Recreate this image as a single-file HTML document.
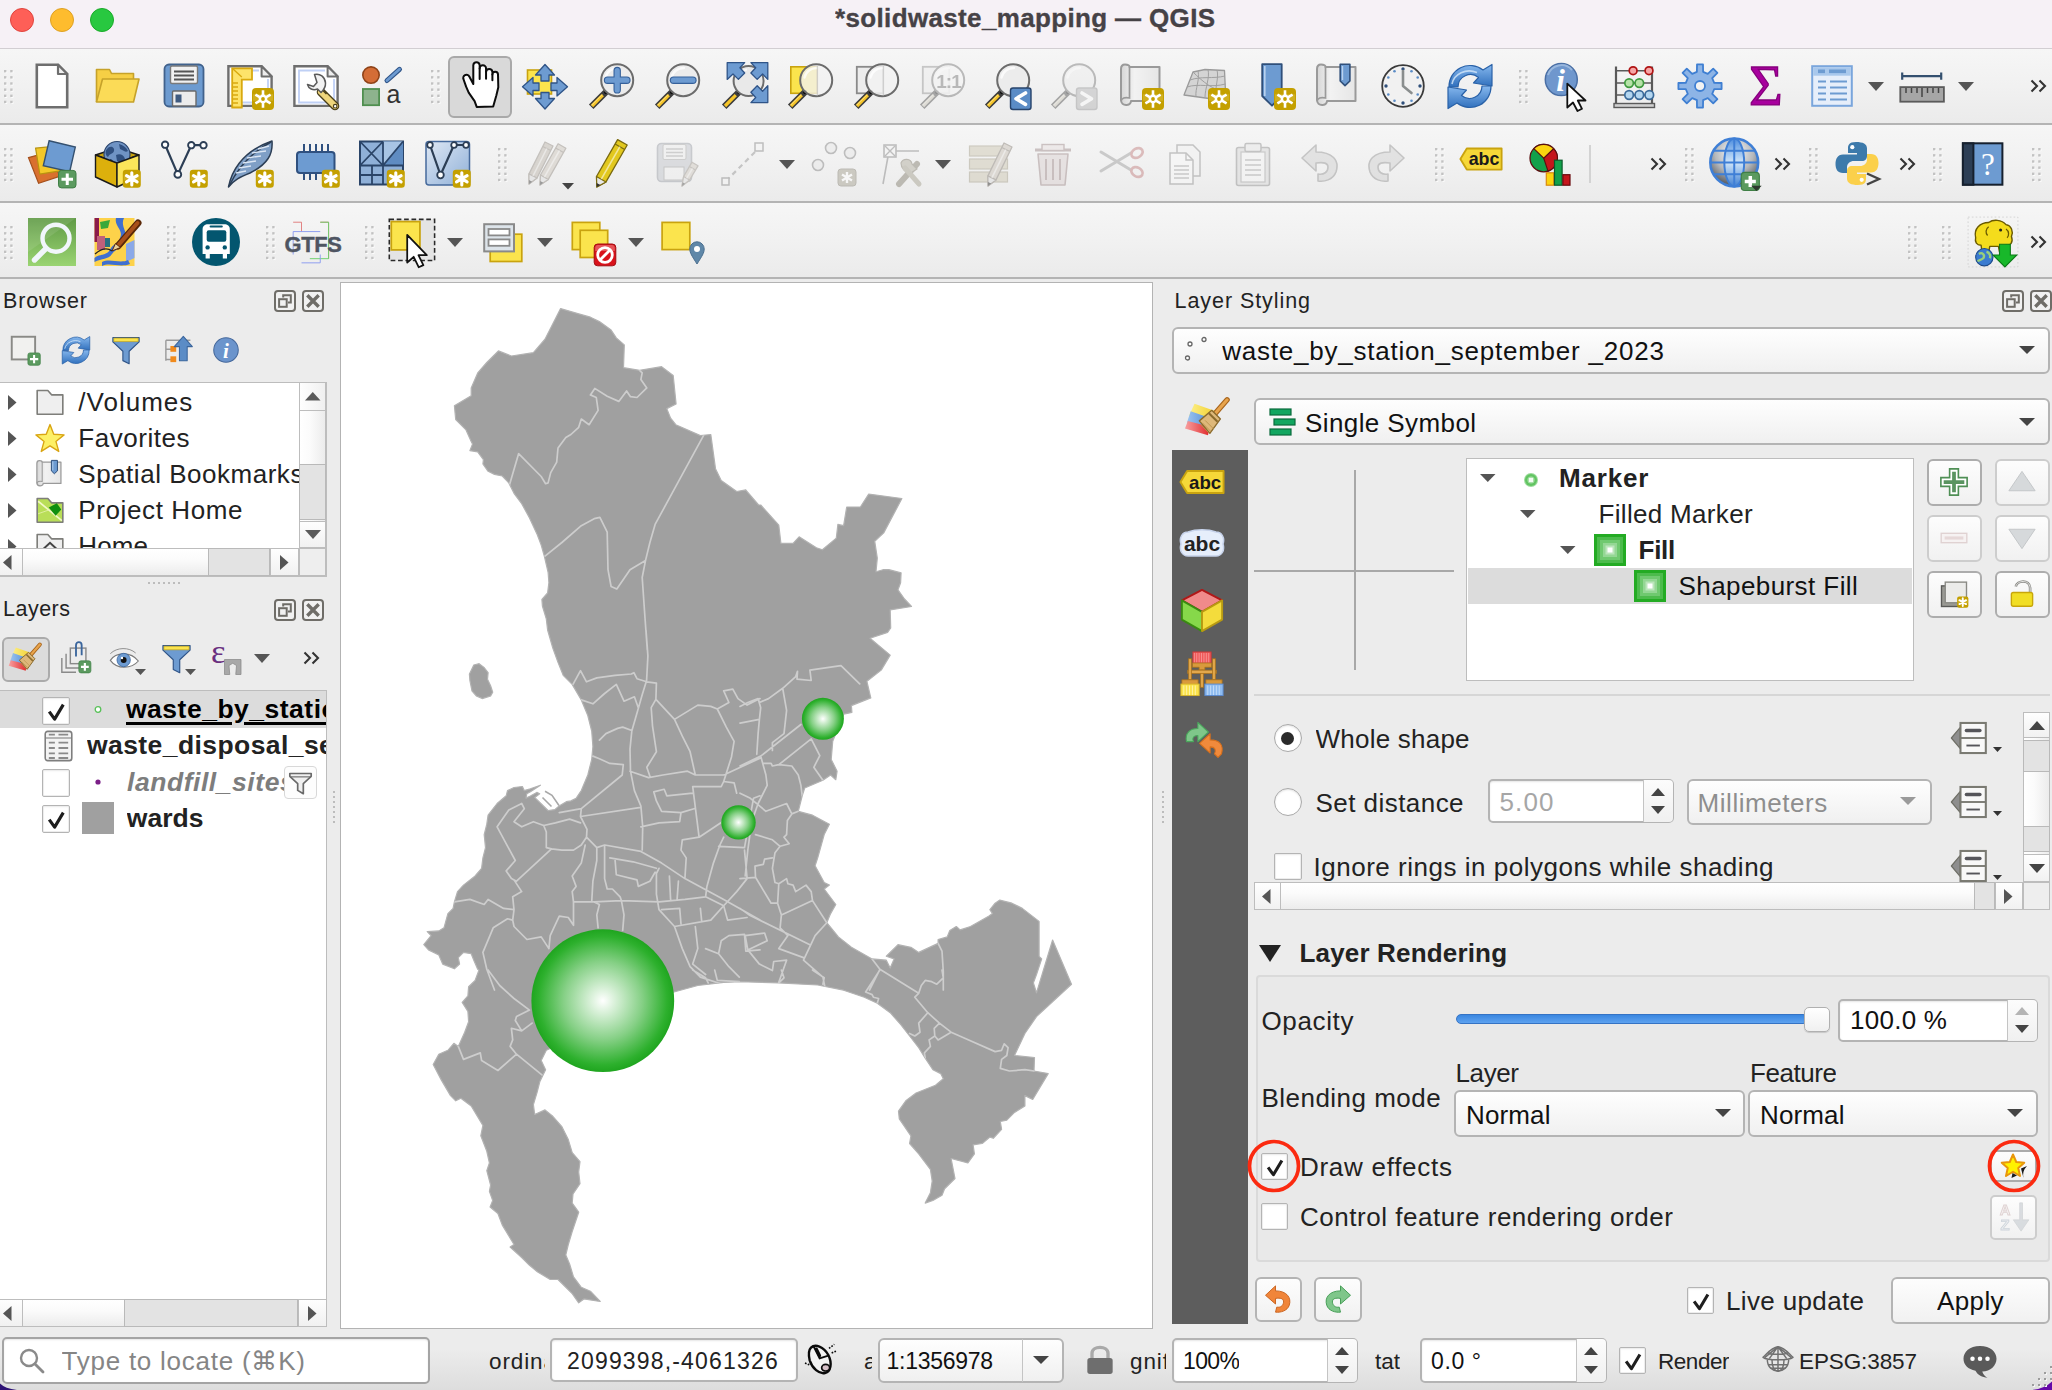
<!DOCTYPE html>
<html><head><meta charset="utf-8"><title>QGIS</title><style>
*{box-sizing:border-box}
html,body{margin:0;padding:0}
body{width:2052px;height:1390px;overflow:hidden;background:#ececec;font-family:"Liberation Sans",sans-serif;position:relative}
div,svg{position:absolute}
svg{overflow:visible}
.t{white-space:pre;overflow:hidden}
.w{background:#fff;border:1px solid #bdbdbd}
.btn{background:linear-gradient(#fdfdfd,#f1f1f1);border:2px solid #b4b4b4;border-radius:6px}
.combo{background:linear-gradient(#fefefe,#f0f0f0);border:2px solid #b4b4b4;border-radius:6px}
.inp{background:#fff;border:2px solid #b4b4b4;border-radius:5px;box-shadow:inset 0 1px 2px rgba(0,0,0,.10)}
.cb{background:#fff;border:1.5px solid #b4b4b4;border-radius:2px;box-shadow:inset 0 0 0 1px #ededed, inset 0 1px 2px rgba(0,0,0,.08)}
.sb{background:linear-gradient(90deg,#fff,#fbfbfb 40%,#ececec);border:1px solid #bdbdbd}
.sbh{background:linear-gradient(#fff,#fbfbfb 40%,#ececec);border:1px solid #bdbdbd}
.th{background:#e3e3e3;border:1px solid #b9b9b9}
.tb{left:0;width:2052px;background:linear-gradient(#f6f6f6,#f1f1f1 50%,#ebebeb);border-bottom:2px solid #b4b4b4}
</style></head><body>
<div style="left:0px;top:0px;width:2052px;height:49px;background:#f6f1f6;border-bottom:1px solid #d2ced2"></div>
<div style="left:10px;top:8px;width:24px;height:24px;border-radius:50%;background:#fe5f57;border:1px solid #e0443e"></div>
<div style="left:50px;top:8px;width:24px;height:24px;border-radius:50%;background:#febc2e;border:1px solid #dea123"></div>
<div style="left:90px;top:8px;width:24px;height:24px;border-radius:50%;background:#28c840;border:1px solid #1aab29"></div>
<div class="t" style="left:835.0px;top:0px;height:36px;line-height:36px;font-size:26px;font-weight:700;color:#464246;-webkit-text-stroke:0.35px #464246;letter-spacing:0.35px;">*solidwaste_mapping — QGIS</div>
<div class="tb" style="left:0px;top:49px;width:2052px;height:76px;"></div>
<div class="tb" style="left:0px;top:125px;width:2052px;height:78px;"></div>
<div class="tb" style="left:0px;top:203px;width:2052px;height:76px;"></div>
<svg style="left:4.1px;top:69.5px" width="10" height="35" viewBox="0 0 10 35"><rect x="1" y="1" width="2.2" height="2.2" fill="#fff"/><rect x="0" y="0" width="2.4" height="2.4" fill="#c2c2c2"/><rect x="7.2" y="1" width="2.2" height="2.2" fill="#fff"/><rect x="6.2" y="0" width="2.4" height="2.4" fill="#c2c2c2"/><rect x="1" y="7.15" width="2.2" height="2.2" fill="#fff"/><rect x="0" y="6.15" width="2.4" height="2.4" fill="#c2c2c2"/><rect x="7.2" y="7.15" width="2.2" height="2.2" fill="#fff"/><rect x="6.2" y="6.15" width="2.4" height="2.4" fill="#c2c2c2"/><rect x="1" y="13.3" width="2.2" height="2.2" fill="#fff"/><rect x="0" y="12.3" width="2.4" height="2.4" fill="#c2c2c2"/><rect x="7.2" y="13.3" width="2.2" height="2.2" fill="#fff"/><rect x="6.2" y="12.3" width="2.4" height="2.4" fill="#c2c2c2"/><rect x="1" y="19.45" width="2.2" height="2.2" fill="#fff"/><rect x="0" y="18.45" width="2.4" height="2.4" fill="#c2c2c2"/><rect x="7.2" y="19.45" width="2.2" height="2.2" fill="#fff"/><rect x="6.2" y="18.45" width="2.4" height="2.4" fill="#c2c2c2"/><rect x="1" y="25.6" width="2.2" height="2.2" fill="#fff"/><rect x="0" y="24.6" width="2.4" height="2.4" fill="#c2c2c2"/><rect x="7.2" y="25.6" width="2.2" height="2.2" fill="#fff"/><rect x="6.2" y="24.6" width="2.4" height="2.4" fill="#c2c2c2"/><rect x="1" y="31.75" width="2.2" height="2.2" fill="#fff"/><rect x="0" y="30.75" width="2.4" height="2.4" fill="#c2c2c2"/><rect x="7.2" y="31.75" width="2.2" height="2.2" fill="#fff"/><rect x="6.2" y="30.75" width="2.4" height="2.4" fill="#c2c2c2"/></svg>
<svg style="left:28px;top:62px" width="48" height="48" viewBox="0 0 48 48"><path d="M8.800,2.800H30L39.200,12V45.200H8.800Z" fill="#fff" stroke="#6e6e6e" stroke-width="2.600"/><path d="M30,2.800V12H39.200Z" fill="#f0f0f0" stroke="#6e6e6e" stroke-width="2.200" stroke-linejoin="round"/></svg>
<svg style="left:93px;top:62px" width="48" height="48" viewBox="0 0 48 48"><path d="M3.5,40V7.5H16.5L18.5,11.5H40.5V17" fill="#f6cf45" stroke="#c6a22a" stroke-width="1.6" stroke-linejoin="round"/><path d="M3.5,40L9.5,17H46L40.5,40Z" fill="#fbdb57" stroke="#c6a22a" stroke-width="1.6" stroke-linejoin="round"/></svg>
<svg style="left:160px;top:62px" width="48" height="48" viewBox="0 0 48 48"><rect x="4.500" y="2.500" width="39" height="42" rx="4.500" fill="#6d9bd0" stroke="#41628c" stroke-width="1.800"/><rect x="10.500" y="4" width="27" height="17.500" rx="1.500" fill="#f1f1f1" stroke="#7a7a7a" stroke-width="1.400"/><path d="M14,9.500H34M14,13.500H34M14,17.500H34" stroke="#555" stroke-width="1.900"/><rect x="12.500" y="29" width="23.500" height="15" rx="1" fill="#ececec" stroke="#6a6a6a" stroke-width="1.400"/><rect x="15.500" y="32.500" width="6" height="8" fill="#3f5b80"/></svg>
<svg style="left:226px;top:62px" width="48" height="48" viewBox="0 0 48 48"><path d="M2.400,4.200H35.600L45.600,14.400V43.900H2.400Z" fill="#fff" stroke="#6e6e6e" stroke-width="2.400" stroke-linejoin="miter"/><path d="M35.600,4.200V14.400H45.600Z" fill="#ededed" stroke="#6e6e6e" stroke-width="2" stroke-linejoin="round"/><path d="M16,8.500H33M42,17V40.500H16" fill="none" stroke="#bfd0f5" stroke-width="1.800"/><path d="M6.200,6.300H26V17.600H15.800V45.500H6.200Z" fill="#fde36a" stroke="#d9a90f" stroke-width="1.800"/><path d="M6.200,6.300L15.800,15" stroke="#d9a90f" stroke-width="1.400"/><path d="M7,21H12M7,25H12M7,29H12M7,33H12M7,37H12M7,41H12" stroke="#d9a90f" stroke-width="1.700"/><rect x="26" y="26" width="22" height="22" rx="4.0" fill="#c4a000"/><rect x="27" y="32.2" width="20" height="6.6" fill="#d8bb3a" opacity=".55"/><path d="M37.0,28.2L37.0,45.8M44.6,32.6L29.4,41.4M44.6,41.4L29.4,32.6" stroke="#fff" stroke-width="2.6"/><circle cx="37" cy="37" r="4.4" fill="#fff"/><circle cx="37" cy="37" r="1.9" fill="#c4a000"/></svg>
<svg style="left:292px;top:62px" width="48" height="48" viewBox="0 0 48 48"><path d="M2.400,4.200H35.600L45.600,14.400V43.900H2.400Z" fill="#fff" stroke="#6e6e6e" stroke-width="2.400"/><path d="M35.600,4.200V14.400H45.600Z" fill="#ededed" stroke="#6e6e6e" stroke-width="2" stroke-linejoin="round"/><path d="M33,8.500H7V40.500H42V17" fill="none" stroke="#bfd0f5" stroke-width="1.800"/><path d="M29,30L43,44" stroke="#4a3f1a" stroke-width="8.600" stroke-linecap="round"/><path d="M29,30L43,44" stroke="#efd67c" stroke-width="6" stroke-linecap="round"/><path d="M30,27.500L34.500,32" stroke="#4a3f1a" stroke-width="1.600"/><circle cx="43.200" cy="44.200" r="1.800" fill="#fff" stroke="#4a3f1a" stroke-width="1.200"/><path d="M22.500,12.500C28,11 33,15 33.500,21C33.800,26 31,28.500 29,30.500L25.500,27C21,29 16.500,26.500 15.500,22.500L21.500,24.500L25,20.500Z" fill="#f2f2f2" stroke="#5a5a5a" stroke-width="1.500" stroke-linejoin="round"/></svg>
<svg style="left:357px;top:62px" width="48" height="48" viewBox="0 0 48 48"><circle cx="14" cy="13.100" r="8.200" fill="#d46d36" stroke="#8f4318" stroke-width="1.600"/><path d="M30,18.500L42.500,7.300" stroke="#2f5488" stroke-width="5" stroke-linecap="round"/><path d="M30,18.500L42.500,7.300" stroke="#6d9bd1" stroke-width="2.800" stroke-linecap="round"/><rect x="5.900" y="27" width="16.200" height="16.200" fill="#8db38d" stroke="#4f8f4f" stroke-width="1.800"/><text x="29.500" y="41.300" font-family="'Liberation Sans',sans-serif" font-size="25" fill="#333">a</text></svg>
<svg style="left:430.7px;top:69.5px" width="10" height="35" viewBox="0 0 10 35"><rect x="1" y="1" width="2.2" height="2.2" fill="#fff"/><rect x="0" y="0" width="2.4" height="2.4" fill="#c2c2c2"/><rect x="7.2" y="1" width="2.2" height="2.2" fill="#fff"/><rect x="6.2" y="0" width="2.4" height="2.4" fill="#c2c2c2"/><rect x="1" y="7.15" width="2.2" height="2.2" fill="#fff"/><rect x="0" y="6.15" width="2.4" height="2.4" fill="#c2c2c2"/><rect x="7.2" y="7.15" width="2.2" height="2.2" fill="#fff"/><rect x="6.2" y="6.15" width="2.4" height="2.4" fill="#c2c2c2"/><rect x="1" y="13.3" width="2.2" height="2.2" fill="#fff"/><rect x="0" y="12.3" width="2.4" height="2.4" fill="#c2c2c2"/><rect x="7.2" y="13.3" width="2.2" height="2.2" fill="#fff"/><rect x="6.2" y="12.3" width="2.4" height="2.4" fill="#c2c2c2"/><rect x="1" y="19.45" width="2.2" height="2.2" fill="#fff"/><rect x="0" y="18.45" width="2.4" height="2.4" fill="#c2c2c2"/><rect x="7.2" y="19.45" width="2.2" height="2.2" fill="#fff"/><rect x="6.2" y="18.45" width="2.4" height="2.4" fill="#c2c2c2"/><rect x="1" y="25.6" width="2.2" height="2.2" fill="#fff"/><rect x="0" y="24.6" width="2.4" height="2.4" fill="#c2c2c2"/><rect x="7.2" y="25.6" width="2.2" height="2.2" fill="#fff"/><rect x="6.2" y="24.6" width="2.4" height="2.4" fill="#c2c2c2"/><rect x="1" y="31.75" width="2.2" height="2.2" fill="#fff"/><rect x="0" y="30.75" width="2.4" height="2.4" fill="#c2c2c2"/><rect x="7.2" y="31.75" width="2.2" height="2.2" fill="#fff"/><rect x="6.2" y="30.75" width="2.4" height="2.4" fill="#c2c2c2"/></svg>
<div style="left:448px;top:56px;width:64px;height:62px;background:#d9d9d9;border:2px solid #a9a9a9;border-radius:6px"></div>
<svg style="left:456px;top:62px" width="48" height="48" viewBox="0 0 48 48"><path d="M17.300,22V3.100A3.200,3.200 0 0 1 23.650,3.100V6.400A3.200,3.200 0 0 1 30.050,6.400V9.800A3.200,3.200 0 0 1 36.400,9.800V12.500A2.800,2.800 0 0 1 42,12.500L42.300,25.300L40.400,33.200L37.200,44.400L20.700,44.900L18.600,39.100L12.700,30.600L10.100,24.700L7.600,17.500A3,3 0 0 1 13.300,14.500Z" fill="#fff" stroke="#0c0c0c" stroke-width="2" stroke-linejoin="round"/><path d="M23.650,6.400V17M30.050,9.800V16.700M36.400,12.500V18.300" fill="none" stroke="#0c0c0c" stroke-width="2" stroke-linecap="round"/></svg>
<svg style="left:521px;top:62px" width="48" height="48" viewBox="0 0 48 48"><rect x="6.500" y="8" width="24" height="24" fill="#fbe44d" stroke="#c9a30f" stroke-width="1.600"/><g fill="#6d9bd1" stroke="#2f5488" stroke-width="1.300" stroke-linejoin="round"><path d="M24,2.500L33.500,13H28V19H20V13H14.500Z"/><path d="M24,47L33.500,36.500H28V30.500H20V36.500H14.500Z"/><path d="M1.500,24.700L12,15.500V21H18V28.500H12V34Z"/><path d="M46.500,24.700L36,15.500V21H30V28.500H36V34Z"/></g></svg>
<svg style="left:587px;top:62px" width="48" height="48" viewBox="0 0 48 48"><path d="M19.5,29.5L4.2,44.8" stroke="#3c3c3c" stroke-width="6.4"/><path d="M15.8,33.2L5,44" stroke="#f7c62a" stroke-width="3.2"/><path d="M15.2,32.6L4.4,43.4" stroke="#fde58a" stroke-width="1" opacity=".9"/><circle cx="19" cy="30" r="1.9" fill="#000"/><circle cx="30.2" cy="18.2" r="16" fill="#ececec" fill-opacity="1" stroke="#6c6c6c" stroke-width="2"/><path d="M18.5,15.5A12,12 0 0 1 31,6" fill="none" stroke="#fff" stroke-width="2.4" opacity=".75" stroke-linecap="round"/><path d="M30.2,8.5V27.9M20.5,18.2H39.9" stroke="#35609a" stroke-width="7.4" stroke-linecap="round"/><path d="M30.2,8.5V27.9M20.5,18.2H39.9" stroke="#6d9bd1" stroke-width="5.2" stroke-linecap="round"/></svg>
<svg style="left:653px;top:62px" width="48" height="48" viewBox="0 0 48 48"><path d="M19.5,29.5L4.2,44.8" stroke="#3c3c3c" stroke-width="6.4"/><path d="M15.8,33.2L5,44" stroke="#f7c62a" stroke-width="3.2"/><path d="M15.2,32.6L4.4,43.4" stroke="#fde58a" stroke-width="1" opacity=".9"/><circle cx="19" cy="30" r="1.9" fill="#000"/><circle cx="30.2" cy="18.2" r="16" fill="#ececec" fill-opacity="1" stroke="#6c6c6c" stroke-width="2"/><path d="M18.5,15.5A12,12 0 0 1 31,6" fill="none" stroke="#fff" stroke-width="2.4" opacity=".75" stroke-linecap="round"/><path d="M20.5,18.2H39.9" stroke="#35609a" stroke-width="7.4" stroke-linecap="round"/><path d="M20.5,18.2H39.9" stroke="#6d9bd1" stroke-width="5.2" stroke-linecap="round"/></svg>
<svg style="left:720px;top:62px" width="48" height="48" viewBox="0 0 48 48"><path d="M19.5,29.5L4.2,44.8" stroke="#3c3c3c" stroke-width="6.4"/><path d="M15.8,33.2L5,44" stroke="#f7c62a" stroke-width="3.2"/><circle cx="19" cy="30" r="1.9" fill="#000"/><circle cx="28.6" cy="19" r="15" fill="#e9e9e9" stroke="#6c6c6c" stroke-width="2"/><path d="M17.5,17A11,11 0 0 1 27,7.5" fill="none" stroke="#fff" stroke-width="2.2" opacity=".7"/><g fill="#6d9bd1" stroke="#2f5488" stroke-width="1.3" stroke-linejoin="round"><path d="M7.2,0.6H24.7L19.9,5.7L24.7,11L18.4,17.4L13,12L7.2,17.4Z"/><path d="M47.8,0.6H30.9L35.7,5.7L30.9,11L37.2,17.4L42.6,12L47.8,17.4Z"/><path d="M47.8,40.6H30.9L35.7,35.5L30.9,30.2L37.2,23.8L42.6,29.2L47.8,23.8Z"/></g></svg>
<svg style="left:786px;top:62px" width="48" height="48" viewBox="0 0 48 48"><rect x="4.800" y="4.800" width="26.500" height="26.500" fill="#fbe44d" stroke="#c9a30f" stroke-width="1.600"/><path d="M19.5,29.5L4.2,44.8" stroke="#3c3c3c" stroke-width="6.4"/><path d="M15.8,33.2L5,44" stroke="#f7c62a" stroke-width="3.2"/><path d="M15.2,32.6L4.4,43.4" stroke="#fde58a" stroke-width="1" opacity=".9"/><circle cx="19" cy="30" r="1.9" fill="#000"/><circle cx="30.2" cy="18.2" r="16" fill="#f2f2f2" fill-opacity="0.78" stroke="#6c6c6c" stroke-width="2"/><path d="M18.5,15.5A12,12 0 0 1 31,6" fill="none" stroke="#fff" stroke-width="2.4" opacity=".75" stroke-linecap="round"/><path d="M31.300,3V33.500" stroke="#c8c8c8" stroke-width="1"/></svg>
<svg style="left:852px;top:62px" width="48" height="48" viewBox="0 0 48 48"><rect x="4.800" y="4.800" width="26.500" height="26.500" fill="#ececec" stroke="#8a8a8a" stroke-width="1.800"/><path d="M19.5,29.5L4.2,44.8" stroke="#3c3c3c" stroke-width="6.4"/><path d="M15.8,33.2L5,44" stroke="#f7c62a" stroke-width="3.2"/><path d="M15.2,32.6L4.4,43.4" stroke="#fde58a" stroke-width="1" opacity=".9"/><circle cx="19" cy="30" r="1.9" fill="#000"/><circle cx="30.2" cy="18.2" r="16" fill="#f2f2f2" fill-opacity="0.85" stroke="#6c6c6c" stroke-width="2"/><path d="M18.5,15.5A12,12 0 0 1 31,6" fill="none" stroke="#fff" stroke-width="2.4" opacity=".75" stroke-linecap="round"/><path d="M31.300,3V33.500" stroke="#c8c8c8" stroke-width="1"/></svg>
<svg style="left:918px;top:62px;opacity:0.42;filter:grayscale(0.9)" width="48" height="48" viewBox="0 0 48 48"><rect x="4.800" y="4.800" width="26.500" height="26.500" fill="#ececec" stroke="#8a8a8a" stroke-width="1.800"/><path d="M19.5,29.5L4.2,44.8" stroke="#3c3c3c" stroke-width="6.4"/><path d="M15.8,33.2L5,44" stroke="#f7c62a" stroke-width="3.2"/><path d="M15.2,32.6L4.4,43.4" stroke="#fde58a" stroke-width="1" opacity=".9"/><circle cx="19" cy="30" r="1.9" fill="#000"/><circle cx="30.2" cy="18.2" r="16" fill="#f6f6f6" fill-opacity="0.85" stroke="#6c6c6c" stroke-width="2"/><path d="M18.5,15.5A12,12 0 0 1 31,6" fill="none" stroke="#fff" stroke-width="2.4" opacity=".75" stroke-linecap="round"/><text x="30.500" y="26" text-anchor="middle" font-family="'Liberation Sans',sans-serif" font-weight="700" font-size="19" fill="#6a6a6a" letter-spacing="-1">1:1</text></svg>
<svg style="left:983px;top:62px" width="48" height="48" viewBox="0 0 48 48"><path d="M19.5,29.5L4.2,44.8" stroke="#3c3c3c" stroke-width="6.4"/><path d="M15.8,33.2L5,44" stroke="#f7c62a" stroke-width="3.2"/><path d="M15.2,32.6L4.4,43.4" stroke="#fde58a" stroke-width="1" opacity=".9"/><circle cx="19" cy="30" r="1.9" fill="#000"/><circle cx="30.2" cy="18.2" r="16" fill="#ececec" fill-opacity="1" stroke="#6c6c6c" stroke-width="2"/><path d="M18.5,15.5A12,12 0 0 1 31,6" fill="none" stroke="#fff" stroke-width="2.4" opacity=".75" stroke-linecap="round"/><rect x="27.500" y="26" width="20.500" height="21.500" rx="2.500" fill="#5b8cc6" stroke="#27436b" stroke-width="1.400"/><path d="M42.500,31L33,36.700L42.500,42.400" fill="none" stroke="#fff" stroke-width="3.600" stroke-linecap="round" stroke-linejoin="round"/></svg>
<svg style="left:1049px;top:62px;opacity:0.42;filter:grayscale(0.9)" width="48" height="48" viewBox="0 0 48 48"><path d="M19.5,29.5L4.2,44.8" stroke="#3c3c3c" stroke-width="6.4"/><path d="M15.8,33.2L5,44" stroke="#f7c62a" stroke-width="3.2"/><path d="M15.2,32.6L4.4,43.4" stroke="#fde58a" stroke-width="1" opacity=".9"/><circle cx="19" cy="30" r="1.9" fill="#000"/><circle cx="30.2" cy="18.2" r="16" fill="#ececec" fill-opacity="1" stroke="#6c6c6c" stroke-width="2"/><path d="M18.5,15.5A12,12 0 0 1 31,6" fill="none" stroke="#fff" stroke-width="2.4" opacity=".75" stroke-linecap="round"/><rect x="27.500" y="26" width="20.500" height="21.500" rx="2.500" fill="#aab0b6" stroke="#8a8f95" stroke-width="1.400"/><path d="M33,31L42.500,36.700L33,42.400" fill="none" stroke="#fff" stroke-width="3.600" stroke-linecap="round" stroke-linejoin="round"/></svg>
<svg style="left:1118px;top:62px" width="48" height="48" viewBox="0 0 48 48"><defs><linearGradient id="scg" x1="0" x2="1"><stop offset="0" stop-color="#d6d6d6"/><stop offset=".35" stop-color="#f2f2f2"/><stop offset="1" stop-color="#e6e6e6"/></linearGradient></defs><path d="M7,2.500C3.500,2.500 3,5 3,7V38C3,44.500 13,44.500 13,39H41.500V5H11.500C11.500,3 9,2.500 7,2.500Z" fill="url(#scg)" stroke="#9a9a9a" stroke-width="2" stroke-linejoin="round"/><path d="M11.500,5V36C7,35 3.500,36 3,39" fill="none" stroke="#9a9a9a" stroke-width="1.700"/><rect x="24" y="26" width="22" height="22" rx="4.0" fill="#c4a000"/><rect x="25" y="32.2" width="20" height="6.6" fill="#d8bb3a" opacity=".55"/><path d="M35.0,28.2L35.0,45.8M42.6,32.6L27.4,41.4M42.6,41.4L27.4,32.6" stroke="#fff" stroke-width="2.6"/><circle cx="35" cy="37" r="4.4" fill="#fff"/><circle cx="35" cy="37" r="1.9" fill="#c4a000"/></svg>
<svg style="left:1183px;top:62px" width="48" height="48" viewBox="0 0 48 48"><path d="M1,33L10,10L22,7.500L41.500,8.500L42.500,30L26,36.500Z" fill="#d4d4d4" stroke="#9a9a9a" stroke-width="1.300" stroke-linejoin="round"/><path d="M7,18C18,14 30,17 42,14M4,25C16,21 28,26 42.500,22M15,9C17,18 12,27 13,34.500M25,7.500C27,16 22,26 22,35.500M34,8C36,16 32,24 33,33M10,10C20,20 30,28 42.500,30" stroke="#a0a0a0" stroke-width="1" fill="none"/><rect x="25" y="26" width="22" height="22" rx="4.0" fill="#c4a000"/><rect x="26" y="32.2" width="20" height="6.6" fill="#d8bb3a" opacity=".55"/><path d="M36.0,28.2L36.0,45.8M43.6,32.6L28.4,41.4M43.6,41.4L28.4,32.6" stroke="#fff" stroke-width="2.6"/><circle cx="36" cy="37" r="4.4" fill="#fff"/><circle cx="36" cy="37" r="1.9" fill="#c4a000"/></svg>
<svg style="left:1254px;top:62px" width="48" height="48" viewBox="0 0 48 48"><path d="M8.200,2.200H27.700V34L18,43.700L8.200,34Z" fill="#6d9bd1" stroke="#2f4f7a" stroke-width="1.800" stroke-linejoin="round"/><path d="M10.800,4V34" stroke="#b9d2ef" stroke-width="1.600"/><rect x="20" y="26" width="22" height="22" rx="4.0" fill="#c4a000"/><rect x="21" y="32.2" width="20" height="6.6" fill="#d8bb3a" opacity=".55"/><path d="M31.0,28.2L31.0,45.8M38.6,32.6L23.4,41.4M38.6,41.4L23.4,32.6" stroke="#fff" stroke-width="2.6"/><circle cx="31" cy="37" r="4.4" fill="#fff"/><circle cx="31" cy="37" r="1.9" fill="#c4a000"/></svg>
<svg style="left:1314px;top:62px" width="48" height="48" viewBox="0 0 48 48"><defs><linearGradient id="scg" x1="0" x2="1"><stop offset="0" stop-color="#d6d6d6"/><stop offset=".35" stop-color="#f2f2f2"/><stop offset="1" stop-color="#e6e6e6"/></linearGradient></defs><path d="M7,2.500C3.500,2.500 3,5 3,7V38C3,44.500 13,44.500 13,39H41.500V5H11.500C11.500,3 9,2.500 7,2.500Z" fill="url(#scg)" stroke="#9a9a9a" stroke-width="2" stroke-linejoin="round"/><path d="M11.500,5V36C7,35 3.500,36 3,39" fill="none" stroke="#9a9a9a" stroke-width="1.700"/><path d="M26.200,2.200H35.900V19L31,23.600L26.200,19Z" fill="#6d9bd1" stroke="#2f4f7a" stroke-width="1.600" stroke-linejoin="round"/><path d="M28.500,4V18" stroke="#b9d2ef" stroke-width="1.400"/></svg>
<svg style="left:1379px;top:62px" width="48" height="48" viewBox="0 0 48 48"><circle cx="24" cy="24" r="20.800" fill="#f1f1f1" stroke="#3a3a3a" stroke-width="1.800"/><circle cx="41.0" cy="24.0" r="1.7" fill="#2f4f7a"/><circle cx="38.7" cy="32.5" r="1.3" fill="#5b8cc6"/><circle cx="32.5" cy="38.7" r="1.3" fill="#5b8cc6"/><circle cx="24.0" cy="41.0" r="1.7" fill="#2f4f7a"/><circle cx="15.5" cy="38.7" r="1.3" fill="#5b8cc6"/><circle cx="9.3" cy="32.5" r="1.3" fill="#5b8cc6"/><circle cx="7.0" cy="24.0" r="1.7" fill="#2f4f7a"/><circle cx="9.3" cy="15.5" r="1.3" fill="#5b8cc6"/><circle cx="15.5" cy="9.3" r="1.3" fill="#5b8cc6"/><circle cx="24.0" cy="7.0" r="1.7" fill="#2f4f7a"/><circle cx="32.5" cy="9.3" r="1.3" fill="#5b8cc6"/><circle cx="38.7" cy="15.5" r="1.3" fill="#5b8cc6"/><path d="M24,9V24L32.500,31" fill="none" stroke="#8a8e8e" stroke-width="2.600" stroke-linecap="round" stroke-linejoin="round"/></svg>
<svg style="left:1446px;top:62px" width="48" height="48" viewBox="0 0 48 48"><defs><linearGradient id="rfg" x1="0" y1="0" x2="0" y2="1"><stop offset="0" stop-color="#86b8ee"/><stop offset="1" stop-color="#2f6fbc"/></linearGradient><linearGradient id="rfg2" x1="0" y1="1" x2="0" y2="0"><stop offset="0" stop-color="#86b8ee"/><stop offset="1" stop-color="#2f6fbc"/></linearGradient></defs><path d="M3,25A21,21 0 0 1 37,8L46,2.500V24L27.500,21L32.500,15.500A12.500,12.500 0 0 0 12,25Z" fill="url(#rfg)" stroke="#2a62a8" stroke-width="1.200" stroke-linejoin="round"/><path d="M3,25A21,21 0 0 1 37,8L46,2.500V24L27.500,21L32.500,15.500A12.500,12.500 0 0 0 12,25Z" fill="url(#rfg2)" stroke="#2a62a8" stroke-width="1.200" stroke-linejoin="round" transform="rotate(180 24 24.500)"/><path d="M6,22C8,12 20,6 31,10.500" fill="none" stroke="#d6e8fa" stroke-width="1.600" opacity=".8"/></svg>
<svg style="left:1518.7px;top:69.5px" width="10" height="35" viewBox="0 0 10 35"><rect x="1" y="1" width="2.2" height="2.2" fill="#fff"/><rect x="0" y="0" width="2.4" height="2.4" fill="#c2c2c2"/><rect x="7.2" y="1" width="2.2" height="2.2" fill="#fff"/><rect x="6.2" y="0" width="2.4" height="2.4" fill="#c2c2c2"/><rect x="1" y="7.15" width="2.2" height="2.2" fill="#fff"/><rect x="0" y="6.15" width="2.4" height="2.4" fill="#c2c2c2"/><rect x="7.2" y="7.15" width="2.2" height="2.2" fill="#fff"/><rect x="6.2" y="6.15" width="2.4" height="2.4" fill="#c2c2c2"/><rect x="1" y="13.3" width="2.2" height="2.2" fill="#fff"/><rect x="0" y="12.3" width="2.4" height="2.4" fill="#c2c2c2"/><rect x="7.2" y="13.3" width="2.2" height="2.2" fill="#fff"/><rect x="6.2" y="12.3" width="2.4" height="2.4" fill="#c2c2c2"/><rect x="1" y="19.45" width="2.2" height="2.2" fill="#fff"/><rect x="0" y="18.45" width="2.4" height="2.4" fill="#c2c2c2"/><rect x="7.2" y="19.45" width="2.2" height="2.2" fill="#fff"/><rect x="6.2" y="18.45" width="2.4" height="2.4" fill="#c2c2c2"/><rect x="1" y="25.6" width="2.2" height="2.2" fill="#fff"/><rect x="0" y="24.6" width="2.4" height="2.4" fill="#c2c2c2"/><rect x="7.2" y="25.6" width="2.2" height="2.2" fill="#fff"/><rect x="6.2" y="24.6" width="2.4" height="2.4" fill="#c2c2c2"/><rect x="1" y="31.75" width="2.2" height="2.2" fill="#fff"/><rect x="0" y="30.75" width="2.4" height="2.4" fill="#c2c2c2"/><rect x="7.2" y="31.75" width="2.2" height="2.2" fill="#fff"/><rect x="6.2" y="30.75" width="2.4" height="2.4" fill="#c2c2c2"/></svg>
<svg style="left:1542px;top:62px" width="48" height="48" viewBox="0 0 48 48"><circle cx="19.300" cy="17.600" r="16" fill="#6f97cd" stroke="#4a6fa5" stroke-width="1.500"/><path d="M6,13A14,14 0 0 1 30,8" fill="none" stroke="#a9c4e6" stroke-width="2" opacity=".7"/><text x="18.500" y="28.500" text-anchor="middle" font-family="'Liberation Serif',serif" font-style="italic" font-weight="700" font-size="31" fill="#fff">i</text><path d="M25.300,21.600V45.500L31,40.500L35.500,49L40,46.800L35.800,38.500H43.500Z" fill="#fff" stroke="#111" stroke-width="1.800" stroke-linejoin="round"/></svg>
<svg style="left:1609px;top:62px" width="48" height="48" viewBox="0 0 48 48"><path d="M7,4.500V42M43,4.500V42" stroke="#5a5a5a" stroke-width="2.200"/><rect x="5" y="41.500" width="40.500" height="4" fill="#d0d0d0" stroke="#5a5a5a" stroke-width="1.400"/><path d="M7,8.700H43M7,21.100H43M7,33H43" stroke="#5a5a5a" stroke-width="1.500"/><g stroke-width="1.700"><circle cx="24.100" cy="8.700" r="3.900" fill="#f6a6a6" stroke="#b01414"/><circle cx="40" cy="8.700" r="3.900" fill="#f6a6a6" stroke="#b01414"/><circle cx="20.100" cy="21.100" r="4.300" fill="#b6e2a8" stroke="#3f9a3f"/><circle cx="30.300" cy="21.100" r="4.300" fill="#b6e2a8" stroke="#3f9a3f"/><circle cx="20.100" cy="33" r="4.300" fill="#b4d6f0" stroke="#3a6a9a"/><circle cx="30.300" cy="33" r="4.300" fill="#b4d6f0" stroke="#3a6a9a"/><circle cx="40.300" cy="33" r="4.300" fill="#b4d6f0" stroke="#3a6a9a"/></g></svg>
<svg style="left:1676px;top:62px" width="48" height="48" viewBox="0 0 48 48"><path d="M38.2,20.9 L45.6,21.0 L45.6,27.0 L38.2,27.1 L36.2,31.8 L41.4,37.2 L37.2,41.4 L31.8,36.2 L27.1,38.2 L27.0,45.6 L21.0,45.6 L20.9,38.2 L16.2,36.2 L10.8,41.4 L6.6,37.2 L11.8,31.8 L9.8,27.1 L2.4,27.0 L2.4,21.0 L9.8,20.9 L11.8,16.2 L6.6,10.8 L10.8,6.6 L16.2,11.8 L20.9,9.8 L21.0,2.4 L27.0,2.4 L27.1,9.8 L31.8,11.8 L37.2,6.6 L41.4,10.8 L36.2,16.2Z" fill="#8db4e6" stroke="#3f7fd2" stroke-width="1.800" stroke-linejoin="round"/><circle cx="24" cy="24" r="5" fill="#f2f2f2" stroke="#3f7fd2" stroke-width="1.800"/></svg>
<svg style="left:1742px;top:62px" width="48" height="48" viewBox="0 0 48 48"><text x="24" y="43.300" text-anchor="middle" font-family="'Liberation Serif',serif" font-weight="400" font-size="58" fill="#a8009e" stroke="#86007e" stroke-width="1.300">Σ</text></svg>
<svg style="left:1808px;top:62px" width="48" height="48" viewBox="0 0 48 48"><rect x="4.200" y="4.200" width="39.600" height="39.600" fill="#e6eefa" stroke="#7aa6dc" stroke-width="2"/><rect x="5.200" y="5.200" width="37.600" height="8.500" fill="#a9c8ec"/><rect x="10" y="7.500" width="7" height="3.600" fill="#6d9bd1"/><rect x="21" y="7.500" width="17" height="3.600" fill="#6d9bd1"/><g stroke="#6d9bd1" stroke-width="2.200"><path d="M10,19.500H18M22,19.500H39M10,25.500H18M22,25.500H39M10,31.500H18M22,31.500H39M10,37.500H18M22,37.500H39"/></g></svg>
<svg style="left:1868px;top:82px" width="16" height="9" viewBox="0 0 16 9"><path d="M0,0H16L8,9Z" fill="#555"/></svg>
<svg style="left:1897px;top:62px" width="48" height="48" viewBox="0 0 48 48"><path d="M5.200,14.100H44.200M5.200,10.500V17.800M44.200,10.500V17.800" stroke="#34506f" stroke-width="2.200" fill="none"/><rect x="3.300" y="25.100" width="43.600" height="14.600" fill="#a6a6a6" stroke="#5a5a5a" stroke-width="1.800"/><path d="M9,26V31M14.500,26V31M20,26V31M25,26V35M30.500,26V31M36,26V31M41.500,26V31" stroke="#444" stroke-width="1.500"/></svg>
<svg style="left:1958px;top:82px" width="16" height="9" viewBox="0 0 16 9"><path d="M0,0H16L8,9Z" fill="#555"/></svg>
<svg style="left:2029.5px;top:79px" width="17" height="14" viewBox="0 0 17 14"><path d="M1.5,1.5L7,7L1.5,12.500M9.500,1.5L15,7L9.500,12.500" fill="none" stroke="#333" stroke-width="2.100"/></svg>
<svg style="left:4.1px;top:147.5px" width="10" height="35" viewBox="0 0 10 35"><rect x="1" y="1" width="2.2" height="2.2" fill="#fff"/><rect x="0" y="0" width="2.4" height="2.4" fill="#c2c2c2"/><rect x="7.2" y="1" width="2.2" height="2.2" fill="#fff"/><rect x="6.2" y="0" width="2.4" height="2.4" fill="#c2c2c2"/><rect x="1" y="7.15" width="2.2" height="2.2" fill="#fff"/><rect x="0" y="6.15" width="2.4" height="2.4" fill="#c2c2c2"/><rect x="7.2" y="7.15" width="2.2" height="2.2" fill="#fff"/><rect x="6.2" y="6.15" width="2.4" height="2.4" fill="#c2c2c2"/><rect x="1" y="13.3" width="2.2" height="2.2" fill="#fff"/><rect x="0" y="12.3" width="2.4" height="2.4" fill="#c2c2c2"/><rect x="7.2" y="13.3" width="2.2" height="2.2" fill="#fff"/><rect x="6.2" y="12.3" width="2.4" height="2.4" fill="#c2c2c2"/><rect x="1" y="19.45" width="2.2" height="2.2" fill="#fff"/><rect x="0" y="18.45" width="2.4" height="2.4" fill="#c2c2c2"/><rect x="7.2" y="19.45" width="2.2" height="2.2" fill="#fff"/><rect x="6.2" y="18.45" width="2.4" height="2.4" fill="#c2c2c2"/><rect x="1" y="25.6" width="2.2" height="2.2" fill="#fff"/><rect x="0" y="24.6" width="2.4" height="2.4" fill="#c2c2c2"/><rect x="7.2" y="25.6" width="2.2" height="2.2" fill="#fff"/><rect x="6.2" y="24.6" width="2.4" height="2.4" fill="#c2c2c2"/><rect x="1" y="31.75" width="2.2" height="2.2" fill="#fff"/><rect x="0" y="30.75" width="2.4" height="2.4" fill="#c2c2c2"/><rect x="7.2" y="31.75" width="2.2" height="2.2" fill="#fff"/><rect x="6.2" y="30.75" width="2.4" height="2.4" fill="#c2c2c2"/></svg>
<svg style="left:28px;top:140px" width="48" height="48" viewBox="0 0 48 48"><path d="M0.500,17.600L22.300,11.700L31.600,36.300L10.600,43.300Z" fill="#d9702e" stroke="#a5501d" stroke-width="1.200"/><path d="M7.600,8.200L30.500,5.900L35.200,30.400L11.800,34Z" fill="#f3c829" stroke="#b8940f" stroke-width="1.200"/><path d="M21.100,0.800L47.300,7.100L41.700,31.600L15.300,25.800Z" fill="#6d9bd1" stroke="#34506f" stroke-width="1.400"/><rect x="30.5" y="30.4" width="17.5" height="17.5" rx="3" fill="#5b9a5f" stroke="#3f7f45" stroke-width="1"/><path d="M39.25,33.4V44.9M33.5,39.15H45.0" stroke="#fff" stroke-width="3"/></svg>
<svg style="left:93px;top:140px" width="48" height="48" viewBox="0 0 48 48"><path d="M2.500,15L24,8L46,15L24,23Z" fill="#c9a20c" stroke="#1a1a1a" stroke-width="1.400" stroke-linejoin="round"/><circle cx="24" cy="14.500" r="13" fill="#6f93c4" stroke="#2c466e" stroke-width="1.200"/><path d="M14,9C17,5 22,7 21,11C20,14 17,13 15,17C12,15 12,11 14,9ZM26,4C30,5 33,7 35,11C32,13 30,10 27,9ZM23,15C27,13 31,15 32,19C30,23 27,23 24,21ZM17,19C19,19 21,21 20,24L17,23Z" fill="#2f4f7f"/><path d="M2.500,15L24,23V47L2.500,37Z" fill="#dcb00c" stroke="#1a1a1a" stroke-width="1.400" stroke-linejoin="round"/><path d="M46,15L24,23V47L46,37Z" fill="#fbe55a" stroke="#1a1a1a" stroke-width="1.400" stroke-linejoin="round"/><rect x="29.8" y="29.8" width="18" height="18" rx="3.2" fill="#c4a000"/><rect x="30.8" y="34.8" width="16" height="5.4" fill="#d8bb3a" opacity=".55"/><path d="M38.8,32.7L38.8,44.9M44.1,35.7L33.5,41.9M44.1,41.9L33.5,35.7" stroke="#fff" stroke-width="3.1" stroke-linecap="round"/></svg>
<svg style="left:160px;top:140px" width="48" height="48" viewBox="0 0 48 48"><path d="M5.100,4.700L17.800,34.400L31.300,5.200H43.500" fill="none" stroke="#2c3e55" stroke-width="2.200" stroke-linejoin="round"/><g fill="#fff" stroke="#2c3e55" stroke-width="1.900"><circle cx="5.100" cy="4.700" r="3.200"/><circle cx="17.800" cy="34.400" r="3.400"/><circle cx="31.300" cy="5.200" r="3.200"/><circle cx="43.500" cy="5.200" r="3.200"/></g><rect x="29.8" y="29.8" width="18" height="18" rx="3.2" fill="#c4a000"/><rect x="30.8" y="34.8" width="16" height="5.4" fill="#d8bb3a" opacity=".55"/><path d="M38.8,32.7L38.8,44.9M44.1,35.7L33.5,41.9M44.1,41.9L33.5,35.7" stroke="#fff" stroke-width="3.1" stroke-linecap="round"/></svg>
<svg style="left:226px;top:140px" width="48" height="48" viewBox="0 0 48 48"><path d="M2.500,47C5,34 14,12 46,1C47,14 42,24 24,33C14,37 8,40 2.500,47Z" fill="#7f9fc6" stroke="#2c3e55" stroke-width="1.500" stroke-linejoin="round"/><path d="M3,46C12,28 26,12 45,2" stroke="#2c3e55" stroke-width="1.500" fill="none"/><path d="M10,33L20,31M13,28L25,26M17,23L30,21M21,18L35,16M26,13L40,11M32,9L43,6" stroke="#dbe6f4" stroke-width="1.300" fill="none"/><rect x="29.8" y="29.8" width="18" height="18" rx="3.2" fill="#c4a000"/><rect x="30.8" y="34.8" width="16" height="5.4" fill="#d8bb3a" opacity=".55"/><path d="M38.8,32.7L38.8,44.9M44.1,35.7L33.5,41.9M44.1,41.9L33.5,35.7" stroke="#fff" stroke-width="3.1" stroke-linecap="round"/></svg>
<svg style="left:292px;top:140px" width="48" height="48" viewBox="0 0 48 48"><path d="M12,12V4M18,12V4M24,12V4M30,12V4M36,12V4M12,33V40M18,33V40M24,33V40" stroke="#2f507f" stroke-width="2"/><rect x="5" y="12" width="37.500" height="21" rx="3" fill="#6d9bd1" stroke="#2f507f" stroke-width="2"/><rect x="29.8" y="29.8" width="18" height="18" rx="3.2" fill="#c4a000"/><rect x="30.8" y="34.8" width="16" height="5.4" fill="#d8bb3a" opacity=".55"/><path d="M38.8,32.7L38.8,44.9M44.1,35.7L33.5,41.9M44.1,41.9L33.5,35.7" stroke="#fff" stroke-width="3.1" stroke-linecap="round"/></svg>
<svg style="left:357px;top:140px" width="48" height="48" viewBox="0 0 48 48"><rect x="3" y="1.500" width="43" height="43" fill="#8fb0d8" stroke="#2a4468" stroke-width="2"/><path d="M26,1.500H46V25.500H26Z" fill="#5f8cc2"/><path d="M26,1.500L46,1.500L26,25.500Z" fill="#a8c4e4"/><path d="M3,25.500H46M26,1.500V44.500M3,1.500L26,25.500M26,1.500L3,25.500M26,25.500L46,1.500M15,25.500V44.500M3,35H26" stroke="#2a4468" stroke-width="1.800" fill="none"/><rect x="29.8" y="29.8" width="18" height="18" rx="3.2" fill="#c4a000"/><rect x="30.8" y="34.8" width="16" height="5.4" fill="#d8bb3a" opacity=".55"/><path d="M38.8,32.7L38.8,44.9M44.1,35.7L33.5,41.9M44.1,41.9L33.5,35.7" stroke="#fff" stroke-width="3.1" stroke-linecap="round"/></svg>
<svg style="left:423px;top:140px" width="48" height="48" viewBox="0 0 48 48"><defs><linearGradient id="nvg" x1="0" y1="0" x2="1" y2="1"><stop offset="0" stop-color="#dfe8f4"/><stop offset="1" stop-color="#8fb0d8"/></linearGradient></defs><rect x="3" y="1.500" width="43.500" height="43.500" rx="3" fill="url(#nvg)" stroke="#466a9c" stroke-width="1.500"/><path d="M7,5L17.500,35L31,5H44" fill="none" stroke="#2c3e55" stroke-width="2.200" stroke-linejoin="round"/><g fill="#fff" stroke="#2c3e55" stroke-width="1.800"><circle cx="7" cy="5" r="2.800"/><circle cx="17.500" cy="35" r="3.300"/><circle cx="31" cy="5" r="2.800"/><circle cx="43" cy="5" r="2.800"/></g><rect x="29.8" y="29.8" width="18" height="18" rx="3.2" fill="#c4a000"/><rect x="30.8" y="34.8" width="16" height="5.4" fill="#d8bb3a" opacity=".55"/><path d="M38.8,32.7L38.8,44.9M44.1,35.7L33.5,41.9M44.1,41.9L33.5,35.7" stroke="#fff" stroke-width="3.1" stroke-linecap="round"/></svg>
<svg style="left:497.7px;top:147.5px" width="10" height="35" viewBox="0 0 10 35"><rect x="1" y="1" width="2.2" height="2.2" fill="#fff"/><rect x="0" y="0" width="2.4" height="2.4" fill="#c2c2c2"/><rect x="7.2" y="1" width="2.2" height="2.2" fill="#fff"/><rect x="6.2" y="0" width="2.4" height="2.4" fill="#c2c2c2"/><rect x="1" y="7.15" width="2.2" height="2.2" fill="#fff"/><rect x="0" y="6.15" width="2.4" height="2.4" fill="#c2c2c2"/><rect x="7.2" y="7.15" width="2.2" height="2.2" fill="#fff"/><rect x="6.2" y="6.15" width="2.4" height="2.4" fill="#c2c2c2"/><rect x="1" y="13.3" width="2.2" height="2.2" fill="#fff"/><rect x="0" y="12.3" width="2.4" height="2.4" fill="#c2c2c2"/><rect x="7.2" y="13.3" width="2.2" height="2.2" fill="#fff"/><rect x="6.2" y="12.3" width="2.4" height="2.4" fill="#c2c2c2"/><rect x="1" y="19.45" width="2.2" height="2.2" fill="#fff"/><rect x="0" y="18.45" width="2.4" height="2.4" fill="#c2c2c2"/><rect x="7.2" y="19.45" width="2.2" height="2.2" fill="#fff"/><rect x="6.2" y="18.45" width="2.4" height="2.4" fill="#c2c2c2"/><rect x="1" y="25.6" width="2.2" height="2.2" fill="#fff"/><rect x="0" y="24.6" width="2.4" height="2.4" fill="#c2c2c2"/><rect x="7.2" y="25.6" width="2.2" height="2.2" fill="#fff"/><rect x="6.2" y="24.6" width="2.4" height="2.4" fill="#c2c2c2"/><rect x="1" y="31.75" width="2.2" height="2.2" fill="#fff"/><rect x="0" y="30.75" width="2.4" height="2.4" fill="#c2c2c2"/><rect x="7.2" y="31.75" width="2.2" height="2.2" fill="#fff"/><rect x="6.2" y="30.75" width="2.4" height="2.4" fill="#c2c2c2"/></svg>
<svg style="left:523px;top:140px;opacity:0.45" width="48" height="48" viewBox="0 0 48 48"><path d="M6.0,44.0 L14.0,38.0 L30.0,6.0 L22.0,2.0 L6.0,33.9Z" fill="#b9b1a6" stroke="#8c857c" stroke-width="1.3" stroke-linejoin="round"/><path d="M6.0,44.0 L14.0,38.0 L6.0,33.9Z" fill="#ddd" stroke="#8c857c" stroke-width="1.2" stroke-linejoin="round"/><path d="M6.0,44.0 L9.2,41.7 L6.0,40.1Z" fill="#333"/><path d="M27.8,10.5 L19.7,6.5" stroke="#8c857c" stroke-width="1.2"/><path d="M10.0,36.0 L23.8,8.5" stroke="#fff" stroke-width="1.6" opacity=".55"/><path d="M17.0,45.0 L25.3,39.4 L42.9,8.2 L35.1,3.8 L17.5,35.0Z" fill="#c9c1b6" stroke="#8c857c" stroke-width="1.3" stroke-linejoin="round"/><path d="M17.0,45.0 L25.3,39.4 L17.5,35.0Z" fill="#ddd" stroke="#8c857c" stroke-width="1.2" stroke-linejoin="round"/><path d="M17.0,45.0 L20.3,42.8 L17.2,41.1Z" fill="#333"/><path d="M40.5,12.6 L32.6,8.1" stroke="#8c857c" stroke-width="1.2"/><path d="M21.4,37.2 L36.5,10.4" stroke="#fff" stroke-width="1.6" opacity=".55"/></svg>
<svg style="left:562px;top:182.75px" width="12" height="6.5" viewBox="0 0 12 6.5"><path d="M0,0H12L6,6.5Z" fill="#444"/></svg>
<svg style="left:588px;top:140px" width="48" height="48" viewBox="0 0 48 48"><path d="M8.8,47.0 L18.0,41.9 L39.2,5.0 L29.6,-0.4 L8.5,36.5Z" fill="#e2c81e" stroke="#7a6a10" stroke-width="1.3" stroke-linejoin="round"/><path d="M8.8,47.0 L18.0,41.9 L8.5,36.5Z" fill="#e8e8e8" stroke="#7a6a10" stroke-width="1.2" stroke-linejoin="round"/><path d="M8.8,47.0 L12.4,45.1 L8.6,42.9Z" fill="#333"/><path d="M36.7,9.4 L27.1,3.9" stroke="#7a6a10" stroke-width="1.2"/><path d="M13.3,39.2 L31.9,6.6" stroke="#fff" stroke-width="1.6" opacity=".55"/></svg>
<svg style="left:653px;top:140px;opacity:0.4" width="48" height="48" viewBox="0 0 48 48"><rect x="4.500" y="3.500" width="34" height="38" rx="4" fill="#b8bcc4" stroke="#8a8f98" stroke-width="1.6"/><rect x="10" y="4.500" width="23" height="15" rx="1.500" fill="#eee" stroke="#999" stroke-width="1.1"/><path d="M13,9H30M13,12.500H30M13,16H30" stroke="#999" stroke-width="1.3"/><rect x="11" y="27" width="20" height="13" fill="#eee" stroke="#888" stroke-width="1"/><path d="M29.0,46.0 L36.6,40.0 L45.0,25.8 L39.0,22.2 L30.6,36.5Z" fill="#c9c1b6" stroke="#8c857c" stroke-width="1.3" stroke-linejoin="round"/><path d="M29.0,46.0 L36.6,40.0 L30.6,36.5Z" fill="#ddd" stroke="#8c857c" stroke-width="1.2" stroke-linejoin="round"/><path d="M29.0,46.0 L32.0,43.7 L29.6,42.3Z" fill="#333"/><path d="M42.5,30.1 L36.4,26.5" stroke="#8c857c" stroke-width="1.2"/><path d="M33.6,38.3 L39.5,28.3" stroke="#fff" stroke-width="1.6" opacity=".55"/></svg>
<svg style="left:719px;top:140px;opacity:0.5" width="48" height="48" viewBox="0 0 48 48"><path d="M7,41L39,9" stroke="#9a9a9a" stroke-width="2.2" stroke-dasharray="5 4"/><rect x="36" y="3" width="8" height="8" fill="#f4f4f4" stroke="#8a8a8a" stroke-width="1.5"/><rect x="3" y="38" width="7" height="7" fill="#f4f4f4" stroke="#8a8a8a" stroke-width="1.5"/></svg>
<svg style="left:779px;top:160px" width="16" height="9" viewBox="0 0 16 9"><path d="M0,0H16L8,9Z" fill="#555"/></svg>
<svg style="left:811px;top:140px;opacity:0.5" width="48" height="48" viewBox="0 0 48 48"><g fill="#e8e8e8" stroke="#8a8a8a" stroke-width="1.6"><circle cx="20" cy="8" r="5.500"/><circle cx="39" cy="13" r="5.500"/><circle cx="7" cy="25" r="5.500"/></g><rect x="27" y="29" width="18" height="17" rx="3" fill="#a9a595" stroke="#8a867a" stroke-width="1"/><path d="M36,32V43M31,34.500L41,40.500M41,34.500L31,40.500" stroke="#fff" stroke-width="2.4"/></svg>
<svg style="left:879px;top:140px;opacity:0.5" width="48" height="48" viewBox="0 0 48 48"><path d="M10,11H40M10,11L4,44" stroke="#8a8a8a" stroke-width="1.6" fill="none"/><rect x="5" y="5" width="12" height="12" fill="#f4f4f4" stroke="#8a8a8a" stroke-width="1.6"/><path d="M6,6L16,16M16,6L6,16" stroke="#8a8a8a" stroke-width="1.4"/><path d="M20,44L38,24" stroke="#8a8577" stroke-width="6" stroke-linecap="round"/><path d="M22,23C24,18 32,18 33,24L38,29L32,33C26,33 22,28 22,23Z" fill="#b5b1a3" stroke="#8a8577" stroke-width="1.2"/><path d="M40,44L26,28" stroke="#a9a595" stroke-width="5" stroke-linecap="round"/></svg>
<svg style="left:935px;top:160px" width="16" height="9" viewBox="0 0 16 9"><path d="M0,0H16L8,9Z" fill="#555"/></svg>
<svg style="left:966px;top:140px;opacity:0.5" width="48" height="48" viewBox="0 0 48 48"><g fill="#cfc9b4" stroke="#a9a38f" stroke-width="1.2"><rect x="3.500" y="6" width="38" height="10"/><rect x="3.500" y="19" width="38" height="10"/><rect x="3.500" y="32" width="38" height="10"/></g><path d="M22.0,46.0 L30.0,39.9 L46.0,7.0 L38.0,3.0 L21.9,35.9Z" fill="#c9c1b6" stroke="#8c857c" stroke-width="1.3" stroke-linejoin="round"/><path d="M22.0,46.0 L30.0,39.9 L21.9,35.9Z" fill="#ddd" stroke="#8c857c" stroke-width="1.2" stroke-linejoin="round"/><path d="M22.0,46.0 L25.2,43.6 L21.9,42.1Z" fill="#333"/><path d="M43.9,11.5 L35.8,7.5" stroke="#8c857c" stroke-width="1.2"/><path d="M25.9,37.9 L39.8,9.5" stroke="#fff" stroke-width="1.6" opacity=".55"/></svg>
<svg style="left:1029px;top:140px;opacity:0.45" width="48" height="48" viewBox="0 0 48 48"><path d="M9,14H39L36,45H12Z" fill="#d9cfcf" stroke="#9a8585" stroke-width="1.6" stroke-linejoin="round"/><path d="M6,10H42" stroke="#9a8585" stroke-width="3"/><rect x="13" y="4.500" width="22" height="6" fill="#e6dede" stroke="#9a8585" stroke-width="1.4"/><path d="M17,19V40M24,19V40M31,19V40" stroke="#9a8585" stroke-width="2"/></svg>
<svg style="left:1098px;top:140px;opacity:0.45" width="48" height="48" viewBox="0 0 48 48"><path d="M3,12L33,30M3,31L33,13" stroke="#9a9a9a" stroke-width="3" stroke-linecap="round"/><g fill="none" stroke="#c07a7a" stroke-width="2.6"><ellipse cx="39" cy="13" rx="6" ry="4.500" transform="rotate(-30 39 13)"/><ellipse cx="39" cy="32" rx="6" ry="4.500" transform="rotate(30 39 32)"/></g></svg>
<svg style="left:1163px;top:140px;opacity:0.45" width="48" height="48" viewBox="0 0 48 48"><path d="M14,5H30L37,12V36H14Z" fill="#f2f2f2" stroke="#8a8a8a" stroke-width="1.5"/><path d="M7,13H23L30,20V44H7Z" fill="#fafafa" stroke="#8a8a8a" stroke-width="1.5"/><path d="M23,13V20H30" fill="none" stroke="#8a8a8a" stroke-width="1.4"/><path d="M11,26H26M11,30H26M11,34H26M11,38H26" stroke="#9a9a9a" stroke-width="1.4"/></svg>
<svg style="left:1229px;top:140px;opacity:0.45" width="48" height="48" viewBox="0 0 48 48"><rect x="7.500" y="7.500" width="33" height="38" rx="2" fill="#d6d6d6" stroke="#8a8a8a" stroke-width="1.6"/><rect x="12" y="12" width="24" height="30" fill="#f6f6f6" stroke="#9a9a9a" stroke-width="1.2"/><rect x="16" y="3.500" width="16" height="8" rx="1.500" fill="#e6e6e6" stroke="#8a8a8a" stroke-width="1.5"/><path d="M16,20H32M16,25H32M16,30H32M16,35H32" stroke="#9a9a9a" stroke-width="1.5"/></svg>
<svg style="left:1296px;top:140px;opacity:0.45" width="48" height="48" viewBox="0 0 48 48"><path d="M6,18L20,5V12C36,12 44,20 40,32C37,40 28,42 22,41V34C28,35 32,32 32,27C32,23 28,22 20,23V31Z" fill="#cfcfcf" stroke="#8f8f8f" stroke-width="1.6" stroke-linejoin="round"/></svg>
<svg style="left:1362px;top:140px;opacity:0.45" width="48" height="48" viewBox="0 0 48 48"><path d="M42,18L28,5V12C12,12 4,20 8,32C11,40 20,42 26,41V34C20,35 16,32 16,27C16,23 20,22 28,23V31Z" fill="#cfcfcf" stroke="#8f8f8f" stroke-width="1.6" stroke-linejoin="round"/></svg>
<svg style="left:1434.7px;top:147.5px" width="10" height="35" viewBox="0 0 10 35"><rect x="1" y="1" width="2.2" height="2.2" fill="#fff"/><rect x="0" y="0" width="2.4" height="2.4" fill="#c2c2c2"/><rect x="7.2" y="1" width="2.2" height="2.2" fill="#fff"/><rect x="6.2" y="0" width="2.4" height="2.4" fill="#c2c2c2"/><rect x="1" y="7.15" width="2.2" height="2.2" fill="#fff"/><rect x="0" y="6.15" width="2.4" height="2.4" fill="#c2c2c2"/><rect x="7.2" y="7.15" width="2.2" height="2.2" fill="#fff"/><rect x="6.2" y="6.15" width="2.4" height="2.4" fill="#c2c2c2"/><rect x="1" y="13.3" width="2.2" height="2.2" fill="#fff"/><rect x="0" y="12.3" width="2.4" height="2.4" fill="#c2c2c2"/><rect x="7.2" y="13.3" width="2.2" height="2.2" fill="#fff"/><rect x="6.2" y="12.3" width="2.4" height="2.4" fill="#c2c2c2"/><rect x="1" y="19.45" width="2.2" height="2.2" fill="#fff"/><rect x="0" y="18.45" width="2.4" height="2.4" fill="#c2c2c2"/><rect x="7.2" y="19.45" width="2.2" height="2.2" fill="#fff"/><rect x="6.2" y="18.45" width="2.4" height="2.4" fill="#c2c2c2"/><rect x="1" y="25.6" width="2.2" height="2.2" fill="#fff"/><rect x="0" y="24.6" width="2.4" height="2.4" fill="#c2c2c2"/><rect x="7.2" y="25.6" width="2.2" height="2.2" fill="#fff"/><rect x="6.2" y="24.6" width="2.4" height="2.4" fill="#c2c2c2"/><rect x="1" y="31.75" width="2.2" height="2.2" fill="#fff"/><rect x="0" y="30.75" width="2.4" height="2.4" fill="#c2c2c2"/><rect x="7.2" y="31.75" width="2.2" height="2.2" fill="#fff"/><rect x="6.2" y="30.75" width="2.4" height="2.4" fill="#c2c2c2"/></svg>
<svg style="left:1459px;top:137px" width="44" height="44" viewBox="0 0 48 48"><path d="M1.500,24L8.500,12.500H46.500V35.500H8.500Z" fill="#f6d838" stroke="#c9a30f" stroke-width="2" stroke-linejoin="round"/><text x="27.300" y="31" text-anchor="middle" font-family="'Liberation Sans',sans-serif" font-weight="700" font-size="19.500" fill="#1a1a1a">abc</text></svg>
<svg style="left:1524px;top:140px" width="48" height="48" viewBox="0 0 48 48"><circle cx="19.700" cy="18.100" r="13.700" fill="#12a14b" stroke="#5a1010" stroke-width="1.300"/><path d="M19.700,18.100L29.600,8.600A13.700,13.700 0 0 1 24,31.100Z" fill="#c4161c" stroke="#5a1010" stroke-width="1.200" stroke-linejoin="round"/><path d="M19.700,18.100L9.800,8.600A13.700,13.700 0 0 1 29.600,8.600Z" fill="#fbd40f" stroke="#5a1010" stroke-width="1.200" stroke-linejoin="round"/><rect x="22.300" y="32.800" width="7.400" height="12.400" fill="#fbd40f" stroke="#d98a0f" stroke-width="1.200"/><rect x="30.500" y="20.200" width="7.600" height="25" fill="#12a14b" stroke="#0a5a2a" stroke-width="1.200"/><rect x="38.900" y="34.700" width="7.100" height="10.500" fill="#c4161c" stroke="#6a0a0e" stroke-width="1.200"/></svg>
<div style="left:1589px;top:145px;width:2px;height:38px;background:#d3d3d3"></div>
<svg style="left:1649.5px;top:157px" width="17" height="14" viewBox="0 0 17 14"><path d="M1.5,1.5L7,7L1.5,12.500M9.500,1.5L15,7L9.500,12.500" fill="none" stroke="#333" stroke-width="2.100"/></svg>
<svg style="left:1684.7px;top:147.5px" width="10" height="35" viewBox="0 0 10 35"><rect x="1" y="1" width="2.2" height="2.2" fill="#fff"/><rect x="0" y="0" width="2.4" height="2.4" fill="#c2c2c2"/><rect x="7.2" y="1" width="2.2" height="2.2" fill="#fff"/><rect x="6.2" y="0" width="2.4" height="2.4" fill="#c2c2c2"/><rect x="1" y="7.15" width="2.2" height="2.2" fill="#fff"/><rect x="0" y="6.15" width="2.4" height="2.4" fill="#c2c2c2"/><rect x="7.2" y="7.15" width="2.2" height="2.2" fill="#fff"/><rect x="6.2" y="6.15" width="2.4" height="2.4" fill="#c2c2c2"/><rect x="1" y="13.3" width="2.2" height="2.2" fill="#fff"/><rect x="0" y="12.3" width="2.4" height="2.4" fill="#c2c2c2"/><rect x="7.2" y="13.3" width="2.2" height="2.2" fill="#fff"/><rect x="6.2" y="12.3" width="2.4" height="2.4" fill="#c2c2c2"/><rect x="1" y="19.45" width="2.2" height="2.2" fill="#fff"/><rect x="0" y="18.45" width="2.4" height="2.4" fill="#c2c2c2"/><rect x="7.2" y="19.45" width="2.2" height="2.2" fill="#fff"/><rect x="6.2" y="18.45" width="2.4" height="2.4" fill="#c2c2c2"/><rect x="1" y="25.6" width="2.2" height="2.2" fill="#fff"/><rect x="0" y="24.6" width="2.4" height="2.4" fill="#c2c2c2"/><rect x="7.2" y="25.6" width="2.2" height="2.2" fill="#fff"/><rect x="6.2" y="24.6" width="2.4" height="2.4" fill="#c2c2c2"/><rect x="1" y="31.75" width="2.2" height="2.2" fill="#fff"/><rect x="0" y="30.75" width="2.4" height="2.4" fill="#c2c2c2"/><rect x="7.2" y="31.75" width="2.2" height="2.2" fill="#fff"/><rect x="6.2" y="30.75" width="2.4" height="2.4" fill="#c2c2c2"/></svg>
<svg style="left:1707.5px;top:137.5px" width="56" height="56" viewBox="0 0 48 48"><defs><radialGradient id="gl" cx=".5" cy=".3" r=".8"><stop offset="0" stop-color="#ffffff"/><stop offset=".5" stop-color="#b5b8bc"/><stop offset="1" stop-color="#2e3238"/></radialGradient><linearGradient id="gl2" x1="0" y1="0" x2="0" y2="1"><stop offset="0" stop-color="#3f86e0"/><stop offset=".5" stop-color="#cfe6fb"/><stop offset="1" stop-color="#3f86e0"/></linearGradient></defs><circle cx="22.500" cy="21" r="20.500" fill="url(#gl)" stroke="#3f7fd6" stroke-width="2.200"/><ellipse cx="22.500" cy="21" rx="8.500" ry="20.500" fill="url(#gl2)" opacity=".9"/><g fill="none" stroke="#3f7fd6" stroke-width="1.700"><ellipse cx="22.500" cy="21" rx="8.500" ry="20.500"/><path d="M2,21H43M5,11H40M5,31H40M22.500,0.500V41.500"/></g><rect x="28.5" y="29.5" width="15.5" height="15.5" rx="3" fill="#5b9a5f" stroke="#3f7f45" stroke-width="1"/><path d="M36.25,32.5V42.0M31.5,37.25H41.0" stroke="#fff" stroke-width="3"/><path d="M37,41H46L41.500,45.500Z" fill="#2e3a2e"/></svg>
<svg style="left:1773.5px;top:157px" width="17" height="14" viewBox="0 0 17 14"><path d="M1.5,1.5L7,7L1.5,12.500M9.500,1.5L15,7L9.500,12.500" fill="none" stroke="#333" stroke-width="2.100"/></svg>
<svg style="left:1808.7px;top:147.5px" width="10" height="35" viewBox="0 0 10 35"><rect x="1" y="1" width="2.2" height="2.2" fill="#fff"/><rect x="0" y="0" width="2.4" height="2.4" fill="#c2c2c2"/><rect x="7.2" y="1" width="2.2" height="2.2" fill="#fff"/><rect x="6.2" y="0" width="2.4" height="2.4" fill="#c2c2c2"/><rect x="1" y="7.15" width="2.2" height="2.2" fill="#fff"/><rect x="0" y="6.15" width="2.4" height="2.4" fill="#c2c2c2"/><rect x="7.2" y="7.15" width="2.2" height="2.2" fill="#fff"/><rect x="6.2" y="6.15" width="2.4" height="2.4" fill="#c2c2c2"/><rect x="1" y="13.3" width="2.2" height="2.2" fill="#fff"/><rect x="0" y="12.3" width="2.4" height="2.4" fill="#c2c2c2"/><rect x="7.2" y="13.3" width="2.2" height="2.2" fill="#fff"/><rect x="6.2" y="12.3" width="2.4" height="2.4" fill="#c2c2c2"/><rect x="1" y="19.45" width="2.2" height="2.2" fill="#fff"/><rect x="0" y="18.45" width="2.4" height="2.4" fill="#c2c2c2"/><rect x="7.2" y="19.45" width="2.2" height="2.2" fill="#fff"/><rect x="6.2" y="18.45" width="2.4" height="2.4" fill="#c2c2c2"/><rect x="1" y="25.6" width="2.2" height="2.2" fill="#fff"/><rect x="0" y="24.6" width="2.4" height="2.4" fill="#c2c2c2"/><rect x="7.2" y="25.6" width="2.2" height="2.2" fill="#fff"/><rect x="6.2" y="24.6" width="2.4" height="2.4" fill="#c2c2c2"/><rect x="1" y="31.75" width="2.2" height="2.2" fill="#fff"/><rect x="0" y="30.75" width="2.4" height="2.4" fill="#c2c2c2"/><rect x="7.2" y="31.75" width="2.2" height="2.2" fill="#fff"/><rect x="6.2" y="30.75" width="2.4" height="2.4" fill="#c2c2c2"/></svg>
<svg style="left:1833px;top:140px" width="48" height="48" viewBox="0 0 48 48"><path d="M23,2C15.500,2 15,5.500 15,8.500V13H24V14.500H10C4.500,14.500 2.500,19 2.500,24C2.500,29 4.500,33 10,33H14V27.500C14,23.500 17,21 21,21H29C32,21 34,19 34,16V8.500C34,4 30,2 23,2Z" fill="#3d7aab"/><circle cx="19.300" cy="7.200" r="2.100" fill="#fff"/><path d="M25,45C32.500,45 33,41.500 33,38.500V34H24V32.500H38C43.500,32.500 45.500,28 45.500,23C45.500,18 43.500,14 38,14H34V19.500C34,23.500 31,26 27,26H19C16,26 14,28 14,31V38.500C14,43 18,45 25,45Z" fill="#fbd04b"/><circle cx="28.700" cy="39.800" r="2.100" fill="#fff"/><path d="M34,33.500L46,39L34,44.500" fill="none" stroke="#444" stroke-width="2.400"/></svg>
<svg style="left:1898.5px;top:157px" width="17" height="14" viewBox="0 0 17 14"><path d="M1.5,1.5L7,7L1.5,12.500M9.500,1.5L15,7L9.500,12.500" fill="none" stroke="#333" stroke-width="2.100"/></svg>
<svg style="left:1932.7px;top:147.5px" width="10" height="35" viewBox="0 0 10 35"><rect x="1" y="1" width="2.2" height="2.2" fill="#fff"/><rect x="0" y="0" width="2.4" height="2.4" fill="#c2c2c2"/><rect x="7.2" y="1" width="2.2" height="2.2" fill="#fff"/><rect x="6.2" y="0" width="2.4" height="2.4" fill="#c2c2c2"/><rect x="1" y="7.15" width="2.2" height="2.2" fill="#fff"/><rect x="0" y="6.15" width="2.4" height="2.4" fill="#c2c2c2"/><rect x="7.2" y="7.15" width="2.2" height="2.2" fill="#fff"/><rect x="6.2" y="6.15" width="2.4" height="2.4" fill="#c2c2c2"/><rect x="1" y="13.3" width="2.2" height="2.2" fill="#fff"/><rect x="0" y="12.3" width="2.4" height="2.4" fill="#c2c2c2"/><rect x="7.2" y="13.3" width="2.2" height="2.2" fill="#fff"/><rect x="6.2" y="12.3" width="2.4" height="2.4" fill="#c2c2c2"/><rect x="1" y="19.45" width="2.2" height="2.2" fill="#fff"/><rect x="0" y="18.45" width="2.4" height="2.4" fill="#c2c2c2"/><rect x="7.2" y="19.45" width="2.2" height="2.2" fill="#fff"/><rect x="6.2" y="18.45" width="2.4" height="2.4" fill="#c2c2c2"/><rect x="1" y="25.6" width="2.2" height="2.2" fill="#fff"/><rect x="0" y="24.6" width="2.4" height="2.4" fill="#c2c2c2"/><rect x="7.2" y="25.6" width="2.2" height="2.2" fill="#fff"/><rect x="6.2" y="24.6" width="2.4" height="2.4" fill="#c2c2c2"/><rect x="1" y="31.75" width="2.2" height="2.2" fill="#fff"/><rect x="0" y="30.75" width="2.4" height="2.4" fill="#c2c2c2"/><rect x="7.2" y="31.75" width="2.2" height="2.2" fill="#fff"/><rect x="6.2" y="30.75" width="2.4" height="2.4" fill="#c2c2c2"/></svg>
<svg style="left:1958px;top:140px" width="48" height="48" viewBox="0 0 48 48"><rect x="4.900" y="3.300" width="39.500" height="41.400" fill="#6d9bd1" stroke="#16202e" stroke-width="2"/><rect x="4.900" y="3.300" width="10.500" height="41.400" fill="#2c3e55" stroke="#16202e" stroke-width="2"/><text x="30" y="34.500" text-anchor="middle" font-family="'Liberation Serif',serif" font-size="31" fill="#fff">?</text></svg>
<svg style="left:2031.7px;top:147.5px" width="10" height="35" viewBox="0 0 10 35"><rect x="1" y="1" width="2.2" height="2.2" fill="#fff"/><rect x="0" y="0" width="2.4" height="2.4" fill="#c2c2c2"/><rect x="7.2" y="1" width="2.2" height="2.2" fill="#fff"/><rect x="6.2" y="0" width="2.4" height="2.4" fill="#c2c2c2"/><rect x="1" y="7.15" width="2.2" height="2.2" fill="#fff"/><rect x="0" y="6.15" width="2.4" height="2.4" fill="#c2c2c2"/><rect x="7.2" y="7.15" width="2.2" height="2.2" fill="#fff"/><rect x="6.2" y="6.15" width="2.4" height="2.4" fill="#c2c2c2"/><rect x="1" y="13.3" width="2.2" height="2.2" fill="#fff"/><rect x="0" y="12.3" width="2.4" height="2.4" fill="#c2c2c2"/><rect x="7.2" y="13.3" width="2.2" height="2.2" fill="#fff"/><rect x="6.2" y="12.3" width="2.4" height="2.4" fill="#c2c2c2"/><rect x="1" y="19.45" width="2.2" height="2.2" fill="#fff"/><rect x="0" y="18.45" width="2.4" height="2.4" fill="#c2c2c2"/><rect x="7.2" y="19.45" width="2.2" height="2.2" fill="#fff"/><rect x="6.2" y="18.45" width="2.4" height="2.4" fill="#c2c2c2"/><rect x="1" y="25.6" width="2.2" height="2.2" fill="#fff"/><rect x="0" y="24.6" width="2.4" height="2.4" fill="#c2c2c2"/><rect x="7.2" y="25.6" width="2.2" height="2.2" fill="#fff"/><rect x="6.2" y="24.6" width="2.4" height="2.4" fill="#c2c2c2"/><rect x="1" y="31.75" width="2.2" height="2.2" fill="#fff"/><rect x="0" y="30.75" width="2.4" height="2.4" fill="#c2c2c2"/><rect x="7.2" y="31.75" width="2.2" height="2.2" fill="#fff"/><rect x="6.2" y="30.75" width="2.4" height="2.4" fill="#c2c2c2"/></svg>
<svg style="left:4.1px;top:225.5px" width="10" height="35" viewBox="0 0 10 35"><rect x="1" y="1" width="2.2" height="2.2" fill="#fff"/><rect x="0" y="0" width="2.4" height="2.4" fill="#c2c2c2"/><rect x="7.2" y="1" width="2.2" height="2.2" fill="#fff"/><rect x="6.2" y="0" width="2.4" height="2.4" fill="#c2c2c2"/><rect x="1" y="7.15" width="2.2" height="2.2" fill="#fff"/><rect x="0" y="6.15" width="2.4" height="2.4" fill="#c2c2c2"/><rect x="7.2" y="7.15" width="2.2" height="2.2" fill="#fff"/><rect x="6.2" y="6.15" width="2.4" height="2.4" fill="#c2c2c2"/><rect x="1" y="13.3" width="2.2" height="2.2" fill="#fff"/><rect x="0" y="12.3" width="2.4" height="2.4" fill="#c2c2c2"/><rect x="7.2" y="13.3" width="2.2" height="2.2" fill="#fff"/><rect x="6.2" y="12.3" width="2.4" height="2.4" fill="#c2c2c2"/><rect x="1" y="19.45" width="2.2" height="2.2" fill="#fff"/><rect x="0" y="18.45" width="2.4" height="2.4" fill="#c2c2c2"/><rect x="7.2" y="19.45" width="2.2" height="2.2" fill="#fff"/><rect x="6.2" y="18.45" width="2.4" height="2.4" fill="#c2c2c2"/><rect x="1" y="25.6" width="2.2" height="2.2" fill="#fff"/><rect x="0" y="24.6" width="2.4" height="2.4" fill="#c2c2c2"/><rect x="7.2" y="25.6" width="2.2" height="2.2" fill="#fff"/><rect x="6.2" y="24.6" width="2.4" height="2.4" fill="#c2c2c2"/><rect x="1" y="31.75" width="2.2" height="2.2" fill="#fff"/><rect x="0" y="30.75" width="2.4" height="2.4" fill="#c2c2c2"/><rect x="7.2" y="31.75" width="2.2" height="2.2" fill="#fff"/><rect x="6.2" y="30.75" width="2.4" height="2.4" fill="#c2c2c2"/></svg>
<svg style="left:28px;top:218px" width="48" height="48" viewBox="0 0 48 48"><defs><linearGradient id="og" x1="0" y1="0" x2="0" y2="1"><stop offset="0" stop-color="#5f9a45"/><stop offset="1" stop-color="#9ad472"/></linearGradient></defs><rect x="0" y="0" width="48" height="48" fill="url(#og)"/><path d="M0,0H48L0,34Z" fill="#fff" opacity=".10"/><circle cx="28" cy="20.200" r="13.500" fill="none" stroke="#f1f6fb" stroke-width="4.400"/><path d="M17.500,31L6.500,42" stroke="#f1f6fb" stroke-width="5.400" stroke-linecap="round"/></svg>
<svg style="left:93.5px;top:218px" width="48" height="48" viewBox="0 0 48 48"><path d="M0.500,0H40.500V48H0.500Z" fill="#fdd24a"/><path d="M0.500,0H5V24H0.500Z" fill="#8a1a4a"/><path d="M3,18H11V32H3Z" fill="#c0607a"/><path d="M6,4L16,2L14,10L7,11Z" fill="#3aa83a"/><path d="M11,20H16V29H11Z" fill="#2a7080"/><path d="M22,0C20,8 30,12 26,20C24,26 18,26 16,32C12,38 4,36 0.500,40V44C8,40 14,42 18,36C22,30 30,30 32,22C34,14 26,8 30,0Z" fill="#3f6fd0"/><path d="M32,26L40.500,22V40L32,44Z" fill="#8aa8e8"/><path d="M8,44C16,40 26,46 34,42L36,46C26,50 16,44 8,48Z" fill="#3f6fd0"/><path d="M24,28L44,5" stroke="#5a2808" stroke-width="7" stroke-linecap="round"/><path d="M24.500,27L43.500,5" stroke="#a8501a" stroke-width="4" stroke-linecap="round"/><path d="M18,33L21.500,25.500L26.500,29.500Z" fill="#e9cf9a" stroke="#5a2808" stroke-width="1"/><path d="M1,36C8,30 14,30 18,33" fill="none" stroke="#222" stroke-width="1.200"/></svg>
<svg style="left:166.7px;top:225.5px" width="10" height="35" viewBox="0 0 10 35"><rect x="1" y="1" width="2.2" height="2.2" fill="#fff"/><rect x="0" y="0" width="2.4" height="2.4" fill="#c2c2c2"/><rect x="7.2" y="1" width="2.2" height="2.2" fill="#fff"/><rect x="6.2" y="0" width="2.4" height="2.4" fill="#c2c2c2"/><rect x="1" y="7.15" width="2.2" height="2.2" fill="#fff"/><rect x="0" y="6.15" width="2.4" height="2.4" fill="#c2c2c2"/><rect x="7.2" y="7.15" width="2.2" height="2.2" fill="#fff"/><rect x="6.2" y="6.15" width="2.4" height="2.4" fill="#c2c2c2"/><rect x="1" y="13.3" width="2.2" height="2.2" fill="#fff"/><rect x="0" y="12.3" width="2.4" height="2.4" fill="#c2c2c2"/><rect x="7.2" y="13.3" width="2.2" height="2.2" fill="#fff"/><rect x="6.2" y="12.3" width="2.4" height="2.4" fill="#c2c2c2"/><rect x="1" y="19.45" width="2.2" height="2.2" fill="#fff"/><rect x="0" y="18.45" width="2.4" height="2.4" fill="#c2c2c2"/><rect x="7.2" y="19.45" width="2.2" height="2.2" fill="#fff"/><rect x="6.2" y="18.45" width="2.4" height="2.4" fill="#c2c2c2"/><rect x="1" y="25.6" width="2.2" height="2.2" fill="#fff"/><rect x="0" y="24.6" width="2.4" height="2.4" fill="#c2c2c2"/><rect x="7.2" y="25.6" width="2.2" height="2.2" fill="#fff"/><rect x="6.2" y="24.6" width="2.4" height="2.4" fill="#c2c2c2"/><rect x="1" y="31.75" width="2.2" height="2.2" fill="#fff"/><rect x="0" y="30.75" width="2.4" height="2.4" fill="#c2c2c2"/><rect x="7.2" y="31.75" width="2.2" height="2.2" fill="#fff"/><rect x="6.2" y="30.75" width="2.4" height="2.4" fill="#c2c2c2"/></svg>
<svg style="left:192px;top:218px" width="48" height="48" viewBox="0 0 48 48"><circle cx="24" cy="24" r="24" fill="#03566f"/><path d="M10.600,36V11.200C10.600,8 13,6.200 16,6.200H32.400C35.400,6.200 37.800,8 37.800,11.200V36Z" fill="#fff"/><rect x="14.700" y="12.300" width="19.600" height="11.400" rx="2" fill="#03566f"/><rect x="17.600" y="7.600" width="13.200" height="1.900" rx=".9" fill="#03566f"/><circle cx="15.600" cy="29.400" r="2.200" fill="#03566f"/><circle cx="32.800" cy="29.400" r="2.200" fill="#03566f"/><rect x="13.600" y="35.500" width="4.200" height="5" fill="#fff"/><rect x="30.800" y="35.500" width="4.200" height="5" fill="#fff"/></svg>
<svg style="left:265.7px;top:225.5px" width="10" height="35" viewBox="0 0 10 35"><rect x="1" y="1" width="2.2" height="2.2" fill="#fff"/><rect x="0" y="0" width="2.4" height="2.4" fill="#c2c2c2"/><rect x="7.2" y="1" width="2.2" height="2.2" fill="#fff"/><rect x="6.2" y="0" width="2.4" height="2.4" fill="#c2c2c2"/><rect x="1" y="7.15" width="2.2" height="2.2" fill="#fff"/><rect x="0" y="6.15" width="2.4" height="2.4" fill="#c2c2c2"/><rect x="7.2" y="7.15" width="2.2" height="2.2" fill="#fff"/><rect x="6.2" y="6.15" width="2.4" height="2.4" fill="#c2c2c2"/><rect x="1" y="13.3" width="2.2" height="2.2" fill="#fff"/><rect x="0" y="12.3" width="2.4" height="2.4" fill="#c2c2c2"/><rect x="7.2" y="13.3" width="2.2" height="2.2" fill="#fff"/><rect x="6.2" y="12.3" width="2.4" height="2.4" fill="#c2c2c2"/><rect x="1" y="19.45" width="2.2" height="2.2" fill="#fff"/><rect x="0" y="18.45" width="2.4" height="2.4" fill="#c2c2c2"/><rect x="7.2" y="19.45" width="2.2" height="2.2" fill="#fff"/><rect x="6.2" y="18.45" width="2.4" height="2.4" fill="#c2c2c2"/><rect x="1" y="25.6" width="2.2" height="2.2" fill="#fff"/><rect x="0" y="24.6" width="2.4" height="2.4" fill="#c2c2c2"/><rect x="7.2" y="25.6" width="2.2" height="2.2" fill="#fff"/><rect x="6.2" y="24.6" width="2.4" height="2.4" fill="#c2c2c2"/><rect x="1" y="31.75" width="2.2" height="2.2" fill="#fff"/><rect x="0" y="30.75" width="2.4" height="2.4" fill="#c2c2c2"/><rect x="7.2" y="31.75" width="2.2" height="2.2" fill="#fff"/><rect x="6.2" y="30.75" width="2.4" height="2.4" fill="#c2c2c2"/></svg>
<svg style="left:289px;top:217px" width="50" height="50" viewBox="0 0 48 48"><g fill="none" stroke-width=".9"><path d="M4,5H12V14M30,5H38V14M38,14V40" stroke="#e07a7a"/><path d="M30,5H38V40H20" stroke="#6ad06a"/><path d="M4,14H30M4,14V36M12,44H30V36" stroke="#8a9af0"/></g><text x="23" y="33.500" text-anchor="middle" font-family="'Liberation Sans',sans-serif" font-weight="700" font-size="21" fill="#4f5562" stroke="#4f5562" stroke-width=".4" letter-spacing="-.3">GTFS</text></svg>
<svg style="left:364.7px;top:225.5px" width="10" height="35" viewBox="0 0 10 35"><rect x="1" y="1" width="2.2" height="2.2" fill="#fff"/><rect x="0" y="0" width="2.4" height="2.4" fill="#c2c2c2"/><rect x="7.2" y="1" width="2.2" height="2.2" fill="#fff"/><rect x="6.2" y="0" width="2.4" height="2.4" fill="#c2c2c2"/><rect x="1" y="7.15" width="2.2" height="2.2" fill="#fff"/><rect x="0" y="6.15" width="2.4" height="2.4" fill="#c2c2c2"/><rect x="7.2" y="7.15" width="2.2" height="2.2" fill="#fff"/><rect x="6.2" y="6.15" width="2.4" height="2.4" fill="#c2c2c2"/><rect x="1" y="13.3" width="2.2" height="2.2" fill="#fff"/><rect x="0" y="12.3" width="2.4" height="2.4" fill="#c2c2c2"/><rect x="7.2" y="13.3" width="2.2" height="2.2" fill="#fff"/><rect x="6.2" y="12.3" width="2.4" height="2.4" fill="#c2c2c2"/><rect x="1" y="19.45" width="2.2" height="2.2" fill="#fff"/><rect x="0" y="18.45" width="2.4" height="2.4" fill="#c2c2c2"/><rect x="7.2" y="19.45" width="2.2" height="2.2" fill="#fff"/><rect x="6.2" y="18.45" width="2.4" height="2.4" fill="#c2c2c2"/><rect x="1" y="25.6" width="2.2" height="2.2" fill="#fff"/><rect x="0" y="24.6" width="2.4" height="2.4" fill="#c2c2c2"/><rect x="7.2" y="25.6" width="2.2" height="2.2" fill="#fff"/><rect x="6.2" y="24.6" width="2.4" height="2.4" fill="#c2c2c2"/><rect x="1" y="31.75" width="2.2" height="2.2" fill="#fff"/><rect x="0" y="30.75" width="2.4" height="2.4" fill="#c2c2c2"/><rect x="7.2" y="31.75" width="2.2" height="2.2" fill="#fff"/><rect x="6.2" y="30.75" width="2.4" height="2.4" fill="#c2c2c2"/></svg>
<svg style="left:387px;top:217px" width="50" height="50" viewBox="0 0 48 48"><rect x="2.200" y="2.300" width="43.500" height="39.500" fill="#e4e4e4" stroke="#2a2a2a" stroke-width="1.500" stroke-dasharray="4.500 2.600"/><rect x="4.100" y="4.400" width="27.500" height="27.200" fill="#fbe44d" stroke="#c9a30f" stroke-width="1.700"/><g transform="translate(19.400,17.200)"><path d="M0,0V26.500L6.200,21L11,31L15.500,29L10.800,19.500H18.800Z" fill="#fff" stroke="#111" stroke-width="1.700" stroke-linejoin="round"/></g></svg>
<svg style="left:447px;top:238px" width="16" height="9" viewBox="0 0 16 9"><path d="M0,0H16L8,9Z" fill="#555"/></svg>
<svg style="left:478px;top:218px" width="48" height="48" viewBox="0 0 48 48"><rect x="12.200" y="16.200" width="31.600" height="27.300" fill="#fbe44d" stroke="#c9a30f" stroke-width="1.700"/><rect x="6.200" y="6.200" width="29.800" height="27.200" fill="#dde4ea" stroke="#8a8a8a" stroke-width="2"/><rect x="10.500" y="11" width="21" height="6.400" fill="#fff" stroke="#8a8a8a" stroke-width="1.800"/><rect x="10.500" y="21.400" width="21" height="6.400" fill="#fff" stroke="#8a8a8a" stroke-width="1.800"/></svg>
<svg style="left:537px;top:238px" width="16" height="9" viewBox="0 0 16 9"><path d="M0,0H16L8,9Z" fill="#555"/></svg>
<svg style="left:569px;top:218px" width="48" height="48" viewBox="0 0 48 48"><rect x="3.300" y="4.400" width="27.500" height="27.200" fill="#fbe44d" stroke="#c9a30f" stroke-width="1.700"/><rect x="11.200" y="12.300" width="27.500" height="27.200" fill="#fbe44d" stroke="#c9a30f" stroke-width="1.700"/><rect x="25.200" y="26" width="21.600" height="21.800" rx="3.500" fill="#d9121a" stroke="#a00a10" stroke-width="1"/><path d="M26.200,33H45.800V30C45.800,28 45,27 43,27H29C27,27 26.200,28 26.200,30Z" fill="#f08a8e" opacity=".55"/><circle cx="36" cy="37" r="7.300" fill="none" stroke="#fff" stroke-width="2.800"/><path d="M31,42L41,32" stroke="#fff" stroke-width="2.800"/></svg>
<svg style="left:628px;top:238px" width="16" height="9" viewBox="0 0 16 9"><path d="M0,0H16L8,9Z" fill="#555"/></svg>
<svg style="left:658px;top:218px" width="48" height="48" viewBox="0 0 48 48"><rect x="4.100" y="4.400" width="27.700" height="27.200" fill="#fbe44d" stroke="#c9a30f" stroke-width="1.700"/><path d="M39,46C34,38 31.800,35 31.800,31A7.200,7.200 0 0 1 46.200,31C46.200,35 44,38 39,46Z" fill="#5f87a8" stroke="#4a6f8f" stroke-width="1"/><circle cx="39" cy="31" r="3" fill="#fff"/></svg>
<svg style="left:1907.7px;top:225.5px" width="10" height="35" viewBox="0 0 10 35"><rect x="1" y="1" width="2.2" height="2.2" fill="#fff"/><rect x="0" y="0" width="2.4" height="2.4" fill="#c2c2c2"/><rect x="7.2" y="1" width="2.2" height="2.2" fill="#fff"/><rect x="6.2" y="0" width="2.4" height="2.4" fill="#c2c2c2"/><rect x="1" y="7.15" width="2.2" height="2.2" fill="#fff"/><rect x="0" y="6.15" width="2.4" height="2.4" fill="#c2c2c2"/><rect x="7.2" y="7.15" width="2.2" height="2.2" fill="#fff"/><rect x="6.2" y="6.15" width="2.4" height="2.4" fill="#c2c2c2"/><rect x="1" y="13.3" width="2.2" height="2.2" fill="#fff"/><rect x="0" y="12.3" width="2.4" height="2.4" fill="#c2c2c2"/><rect x="7.2" y="13.3" width="2.2" height="2.2" fill="#fff"/><rect x="6.2" y="12.3" width="2.4" height="2.4" fill="#c2c2c2"/><rect x="1" y="19.45" width="2.2" height="2.2" fill="#fff"/><rect x="0" y="18.45" width="2.4" height="2.4" fill="#c2c2c2"/><rect x="7.2" y="19.45" width="2.2" height="2.2" fill="#fff"/><rect x="6.2" y="18.45" width="2.4" height="2.4" fill="#c2c2c2"/><rect x="1" y="25.6" width="2.2" height="2.2" fill="#fff"/><rect x="0" y="24.6" width="2.4" height="2.4" fill="#c2c2c2"/><rect x="7.2" y="25.6" width="2.2" height="2.2" fill="#fff"/><rect x="6.2" y="24.6" width="2.4" height="2.4" fill="#c2c2c2"/><rect x="1" y="31.75" width="2.2" height="2.2" fill="#fff"/><rect x="0" y="30.75" width="2.4" height="2.4" fill="#c2c2c2"/><rect x="7.2" y="31.75" width="2.2" height="2.2" fill="#fff"/><rect x="6.2" y="30.75" width="2.4" height="2.4" fill="#c2c2c2"/></svg>
<svg style="left:1941.7px;top:225.5px" width="10" height="35" viewBox="0 0 10 35"><rect x="1" y="1" width="2.2" height="2.2" fill="#fff"/><rect x="0" y="0" width="2.4" height="2.4" fill="#c2c2c2"/><rect x="7.2" y="1" width="2.2" height="2.2" fill="#fff"/><rect x="6.2" y="0" width="2.4" height="2.4" fill="#c2c2c2"/><rect x="1" y="7.15" width="2.2" height="2.2" fill="#fff"/><rect x="0" y="6.15" width="2.4" height="2.4" fill="#c2c2c2"/><rect x="7.2" y="7.15" width="2.2" height="2.2" fill="#fff"/><rect x="6.2" y="6.15" width="2.4" height="2.4" fill="#c2c2c2"/><rect x="1" y="13.3" width="2.2" height="2.2" fill="#fff"/><rect x="0" y="12.3" width="2.4" height="2.4" fill="#c2c2c2"/><rect x="7.2" y="13.3" width="2.2" height="2.2" fill="#fff"/><rect x="6.2" y="12.3" width="2.4" height="2.4" fill="#c2c2c2"/><rect x="1" y="19.45" width="2.2" height="2.2" fill="#fff"/><rect x="0" y="18.45" width="2.4" height="2.4" fill="#c2c2c2"/><rect x="7.2" y="19.45" width="2.2" height="2.2" fill="#fff"/><rect x="6.2" y="18.45" width="2.4" height="2.4" fill="#c2c2c2"/><rect x="1" y="25.6" width="2.2" height="2.2" fill="#fff"/><rect x="0" y="24.6" width="2.4" height="2.4" fill="#c2c2c2"/><rect x="7.2" y="25.6" width="2.2" height="2.2" fill="#fff"/><rect x="6.2" y="24.6" width="2.4" height="2.4" fill="#c2c2c2"/><rect x="1" y="31.75" width="2.2" height="2.2" fill="#fff"/><rect x="0" y="30.75" width="2.4" height="2.4" fill="#c2c2c2"/><rect x="7.2" y="31.75" width="2.2" height="2.2" fill="#fff"/><rect x="6.2" y="30.75" width="2.4" height="2.4" fill="#c2c2c2"/></svg>
<svg style="left:1967px;top:216px" width="52" height="52" viewBox="0 0 48 48"><rect x="1" y="1" width="46" height="46" fill="none" stroke="#cfcfcf" stroke-width=".8" stroke-dasharray="1.500 2"/><path d="M8,20C6,12 12,6 20,6C24,3 32,3 36,8C41,9 43,14 41,19C43,24 40,28 36,27L35,33H30L29,28H21L20,34H14L13,27C9,27 7,24 8,20Z" fill="#f4dc1c" stroke="#6a5a00" stroke-width="1.300" stroke-linejoin="round"/><path d="M36,12C39,14 39,18 37,20M20,10C17,12 17,16 19,18" fill="none" stroke="#6a5a00" stroke-width="1.200"/><circle cx="31" cy="13" r="1.400" fill="#222"/><circle cx="16" cy="38" r="8" fill="#3a7bd0" stroke="#1d4a8a" stroke-width="1"/><path d="M11,35C14,33 17,36 15,39C13,41 11,40 10,42M18,33C21,34 22,37 21,39" stroke="#9ad07a" stroke-width="2.200" fill="none"/><path d="M30,26H40V36H46L35,47L24,36H30Z" fill="#18b82a" stroke="#0c7a18" stroke-width="1"/></svg>
<svg style="left:2029.5px;top:235px" width="17" height="14" viewBox="0 0 17 14"><path d="M1.5,1.5L7,7L1.5,12.500M9.500,1.5L15,7L9.500,12.500" fill="none" stroke="#333" stroke-width="2.100"/></svg>
<div class="t" style="left:3.0px;top:286px;height:30px;line-height:30px;font-size:21.5px;font-weight:400;color:#222;letter-spacing:0.85px;">Browser</div>
<div style="left:274px;top:290px;width:22px;height:22px;border:2px solid #6f6d68;border-radius:4px;background:#f1f1f1"></div><div style="left:302px;top:290px;width:22px;height:22px;border:2px solid #6f6d68;border-radius:4px;background:#f1f1f1"></div><svg style="left:274px;top:290px" width="22" height="22" viewBox="0 0 22 22"><path d="M9.200,7.500V5.300H16.800V12.500H14" fill="none" stroke="#6f6d68" stroke-width="2"/><rect x="5.100" y="9.200" width="7.600" height="7.600" fill="none" stroke="#6f6d68" stroke-width="2"/></svg><svg style="left:302px;top:290px" width="22" height="22" viewBox="0 0 22 22"><path d="M5.300,5.300L16.700,16.700M16.700,5.300L5.300,16.700" stroke="#6f6d68" stroke-width="3.400"/></svg>
<svg style="left:9px;top:333.5px" width="33" height="33" viewBox="0 0 48 48"><rect x="4" y="4" width="34" height="33" fill="#f1f1ef" stroke="#8a8a86" stroke-width="2.800"/><rect x="27.5" y="27.5" width="18" height="18" rx="3" fill="#5b9a5f" stroke="#3f7f45" stroke-width="1"/><path d="M36.5,30.5V42.5M30.5,36.5H42.5" stroke="#fff" stroke-width="3"/></svg>
<svg style="left:61px;top:335px" width="30" height="30" viewBox="0 0 48 48"><defs><linearGradient id="rfg" x1="0" y1="0" x2="0" y2="1"><stop offset="0" stop-color="#86b8ee"/><stop offset="1" stop-color="#2f6fbc"/></linearGradient><linearGradient id="rfg2" x1="0" y1="1" x2="0" y2="0"><stop offset="0" stop-color="#86b8ee"/><stop offset="1" stop-color="#2f6fbc"/></linearGradient></defs><path d="M3,25A21,21 0 0 1 37,8L46,2.500V24L27.500,21L32.500,15.500A12.500,12.500 0 0 0 12,25Z" fill="url(#rfg)" stroke="#2a62a8" stroke-width="1.200" stroke-linejoin="round"/><path d="M3,25A21,21 0 0 1 37,8L46,2.500V24L27.500,21L32.500,15.500A12.500,12.500 0 0 0 12,25Z" fill="url(#rfg2)" stroke="#2a62a8" stroke-width="1.200" stroke-linejoin="round" transform="rotate(180 24 24.500)"/><path d="M6,22C8,12 20,6 31,10.500" fill="none" stroke="#d6e8fa" stroke-width="1.600" opacity=".8"/></svg>
<svg style="left:110.5px;top:335px" width="30" height="30" viewBox="0 0 48 48"><path d="M3,4H45V11L29,26V46L19,41V26L3,11Z" fill="#6d9bd1" stroke="#2f5488" stroke-width="1.800" stroke-linejoin="round"/><path d="M4.500,5H43.500V10.500H4.500Z" fill="#fbe44d" stroke="#c9a30f" stroke-width="1"/></svg>
<svg style="left:161.5px;top:334.5px" width="31" height="31" viewBox="0 0 48 48"><path d="M6,8H44M6,8V40M6,22H14M6,38H14" stroke="#9a9a9a" stroke-width="2.200" fill="none"/><rect x="13" y="17" width="9" height="9" fill="#f08a1c"/><rect x="13" y="33" width="9" height="9" fill="#f08a1c"/><path d="M33,2L47,18H39V40H27V18H19Z" fill="#5b8cc6" stroke="#3a659c" stroke-width="1.600" stroke-linejoin="round"/></svg>
<svg style="left:212px;top:336px" width="28" height="28" viewBox="0 0 48 48"><circle cx="24" cy="24" r="21" fill="#6b94cc" stroke="#46699c" stroke-width="1.800"/><text x="24" y="37" text-anchor="middle" font-family="'Liberation Serif',serif" font-style="italic" font-weight="700" font-size="36" fill="#fff">i</text></svg>
<div class="w" style="left:-1px;top:382px;width:328px;height:195px;"></div>
<div style="left:0px;top:384px;width:299px;height:164px;overflow:hidden"><svg style="left:8px;top:10.5px" width="8.5" height="15" viewBox="0 0 8.5 15"><path d="M0,0V15L8.5,7.5Z" fill="#555"/></svg><svg style="left:35px;top:3px" width="30" height="30" viewBox="0 0 48 48"><path d="M3.500,43.500V5.500H20.500L26.500,12.500H44.500V43.500Z" fill="#efefef" stroke="#7e7e7a" stroke-width="2.600" stroke-linejoin="round"/></svg><div class="t" style="left:78.3px;top:-0.5px;height:36px;line-height:36px;font-size:26px;font-weight:400;color:#222;letter-spacing:1.01px;">/Volumes</div><svg style="left:8px;top:46.5px" width="8.5" height="15" viewBox="0 0 8.5 15"><path d="M0,0V15L8.5,7.5Z" fill="#555"/></svg><svg style="left:35px;top:39px" width="30" height="30" viewBox="0 0 48 48"><path d="M24,2.500L30,18L46.500,19L33.500,29.500L38,45.500L24,36.500L10,45.500L14.500,29.500L1.500,19L18,18Z" fill="#fdf066" stroke="#d9a514" stroke-width="2.200" stroke-linejoin="round"/></svg><div class="t" style="left:78.3px;top:35.5px;height:36px;line-height:36px;font-size:26px;font-weight:400;color:#222;letter-spacing:0.54px;">Favorites</div><svg style="left:8px;top:82.5px" width="8.5" height="15" viewBox="0 0 8.5 15"><path d="M0,0V15L8.5,7.5Z" fill="#555"/></svg><svg style="left:35px;top:75px" width="30" height="30" viewBox="0 0 48 48"><defs><linearGradient id="scg" x1="0" x2="1"><stop offset="0" stop-color="#d6d6d6"/><stop offset=".35" stop-color="#f2f2f2"/><stop offset="1" stop-color="#e6e6e6"/></linearGradient></defs><path d="M7,2.500C3.500,2.500 3,5 3,7V38C3,44.500 13,44.500 13,39H41.500V5H11.500C11.500,3 9,2.500 7,2.500Z" fill="url(#scg)" stroke="#9a9a9a" stroke-width="2" stroke-linejoin="round"/><path d="M11.500,5V36C7,35 3.500,36 3,39" fill="none" stroke="#9a9a9a" stroke-width="1.700"/><path d="M26.200,2.200H35.900V19L31,23.600L26.200,19Z" fill="#6d9bd1" stroke="#2f4f7a" stroke-width="1.600" stroke-linejoin="round"/><path d="M28.500,4V18" stroke="#b9d2ef" stroke-width="1.400"/></svg><div class="t" style="left:78.3px;top:71.5px;height:36px;line-height:36px;font-size:26px;font-weight:400;color:#222;letter-spacing:0.52px;">Spatial Bookmarks</div><svg style="left:8px;top:118.5px" width="8.5" height="15" viewBox="0 0 8.5 15"><path d="M0,0V15L8.5,7.5Z" fill="#555"/></svg><svg style="left:35px;top:111px" width="30" height="30" viewBox="0 0 48 48"><path d="M3.500,43.500V5.500H20.500L26.500,12.500H44.500V43.500Z" fill="#b9de58" stroke="#7e7e7a" stroke-width="2.600" stroke-linejoin="round"/><path d="M5,10L43,41" stroke="#f2f8c8" stroke-width="2.600" fill="none"/><path d="M5,30L22,24" stroke="#e6f2b0" stroke-width="1.300" fill="none"/><path d="M22,20L35,13L42,23L33,33Z" fill="#0f8f0f"/></svg><div class="t" style="left:78.3px;top:107.5px;height:36px;line-height:36px;font-size:26px;font-weight:400;color:#222;letter-spacing:0.61px;">Project Home</div><svg style="left:8px;top:154.5px" width="8.5" height="15" viewBox="0 0 8.5 15"><path d="M0,0V15L8.5,7.5Z" fill="#555"/></svg><svg style="left:35px;top:147px" width="30" height="30" viewBox="0 0 48 48"><path d="M3.500,43.500V5.500H20.500L26.500,12.500H44.500V43.500Z" fill="#efefef" stroke="#7e7e7a" stroke-width="2.600" stroke-linejoin="round"/><path d="M12,30L24,19L36,30" fill="none" stroke="#444" stroke-width="3.200"/></svg><div class="t" style="left:78.3px;top:143.5px;height:36px;line-height:36px;font-size:26px;font-weight:400;color:#222;letter-spacing:0.09px;">Home</div></div>
<div class="sb" style="left:299px;top:382px;width:27px;height:166px;"></div>
<div style="left:299px;top:382px;width:27px;height:29px;border:1px solid #bdbdbd;background:linear-gradient(90deg,#fefefe,#f0f0f0)"></div>
<svg style="left:304.75px;top:391.75px" width="15.5" height="8.5" viewBox="0 0 15.5 8.5"><path d="M0,8.5H15.5L7.75,0Z" fill="#5a5a5a"/></svg>
<div class="th" style="left:299px;top:464px;width:27px;height:56px;"></div>
<div style="left:299px;top:521px;width:27px;height:27px;border:1px solid #bdbdbd;background:linear-gradient(#fefefe,#f1f1f1)"></div>
<svg style="left:304.5px;top:529.5px" width="16" height="9" viewBox="0 0 16 9"><path d="M0,0H16L8,9Z" fill="#5a5a5a"/></svg>
<div class="sbh" style="left:0px;top:548px;width:299px;height:28px;"></div>
<div style="left:-1px;top:548px;width:24px;height:28px;border:1px solid #bdbdbd;background:linear-gradient(#fefefe,#f1f1f1)"></div>
<svg style="left:3px;top:554.5px" width="8.5" height="15" viewBox="0 0 8.5 15"><path d="M8.5,0V15L0,7.5Z" fill="#555"/></svg>
<div class="th" style="left:208px;top:548px;width:62px;height:28px;"></div>
<div style="left:270px;top:548px;width:29px;height:28px;border:1px solid #bdbdbd;background:linear-gradient(#fefefe,#f1f1f1)"></div>
<svg style="left:280px;top:554.5px" width="8.5" height="15" viewBox="0 0 8.5 15"><path d="M0,0V15L8.5,7.5Z" fill="#555"/></svg>
<div style="left:299px;top:548px;width:27px;height:28px;border:1px solid #bdbdbd;background:#eeeeee"></div>
<svg style="left:148px;top:582px" width="34" height="3" viewBox="0 0 34 3"><rect x="0" y="0" width="2" height="2" fill="#bcbcbc"/><rect x="5" y="0" width="2" height="2" fill="#bcbcbc"/><rect x="10" y="0" width="2" height="2" fill="#bcbcbc"/><rect x="15" y="0" width="2" height="2" fill="#bcbcbc"/><rect x="20" y="0" width="2" height="2" fill="#bcbcbc"/><rect x="25" y="0" width="2" height="2" fill="#bcbcbc"/><rect x="30" y="0" width="2" height="2" fill="#bcbcbc"/></svg>
<div class="t" style="left:3.0px;top:594px;height:30px;line-height:30px;font-size:21.5px;font-weight:400;color:#222;letter-spacing:0.50px;">Layers</div>
<div style="left:274px;top:599px;width:22px;height:22px;border:2px solid #6f6d68;border-radius:4px;background:#f1f1f1"></div><div style="left:302px;top:599px;width:22px;height:22px;border:2px solid #6f6d68;border-radius:4px;background:#f1f1f1"></div><svg style="left:274px;top:599px" width="22" height="22" viewBox="0 0 22 22"><path d="M9.200,7.500V5.300H16.800V12.500H14" fill="none" stroke="#6f6d68" stroke-width="2"/><rect x="5.100" y="9.200" width="7.600" height="7.600" fill="none" stroke="#6f6d68" stroke-width="2"/></svg><svg style="left:302px;top:599px" width="22" height="22" viewBox="0 0 22 22"><path d="M5.300,5.300L16.700,16.700M16.700,5.300L5.300,16.700" stroke="#6f6d68" stroke-width="3.400"/></svg>
<div style="left:2px;top:637px;width:48px;height:45px;background:#dcdcdc;border:2px solid #ababab;border-radius:6px"></div>
<svg style="left:8px;top:641px" width="34" height="34" viewBox="0 0 48 48"><defs><linearGradient id="sbg1" x1="0" y1="0" x2="1" y2="0"><stop offset="0" stop-color="#fdf08a"/><stop offset="1" stop-color="#f1cf2c"/></linearGradient><linearGradient id="sbg2" x1="0" y1="0" x2="1" y2="0"><stop offset="0" stop-color="#9cc4f0"/><stop offset="1" stop-color="#4a86d0"/></linearGradient><linearGradient id="sbg3" x1="0" y1="0" x2="1" y2="0"><stop offset="0" stop-color="#f8a0a0"/><stop offset="1" stop-color="#e0282a"/></linearGradient></defs><path d="M11,9L33,17L27,33L5,22Z" fill="url(#sbg1)"/><path d="M7,17L30,25L25,38L3,29Z" fill="url(#sbg2)"/><path d="M4,27L27,33L25,42L1,35Z" fill="url(#sbg3)"/><path d="M31,21L45,5" stroke="#a8651c" stroke-width="5.600" stroke-linecap="round"/><path d="M31,21L45,5" stroke="#e8a44c" stroke-width="3.200" stroke-linecap="round"/><path d="M16,27L29,16L38,25L27,40Z" fill="#deb87a" stroke="#8a6a2c" stroke-width="1.400" stroke-linejoin="round"/><path d="M26,19L35,28" stroke="#8a6a2c" stroke-width="2.200"/><path d="M19,29L28,38M22,26.500L31,35.500M17.500,31L25.500,39" stroke="#b8904c" stroke-width=".9"/></svg>
<svg style="left:59px;top:641px" width="34" height="34" viewBox="0 0 48 48"><path d="M4,24V44H24M10,18V38H32" fill="none" stroke="#8a8a8a" stroke-width="2"/><rect x="16" y="10" width="22" height="22" fill="#ececec" stroke="#8a8a8a" stroke-width="2"/><path d="M24,22V6C24,0 32,0 32,6V20" fill="none" stroke="#3a659c" stroke-width="2.600"/><rect x="28" y="28" width="17" height="17" rx="3" fill="#5b9a5f" stroke="#3f7f45" stroke-width="1"/><path d="M36.5,31V42M31,36.5H42" stroke="#fff" stroke-width="3"/></svg>
<svg style="left:109px;top:643px" width="32" height="32" viewBox="0 0 48 48"><path d="M2,26C10,14 32,12 44,27C34,39 12,40 2,26Z" fill="#fff" stroke="#7a7a7a" stroke-width="1.700"/><path d="M2,16C12,6 30,6 40,15" fill="none" stroke="#8a8a8a" stroke-width="1.400"/><circle cx="22" cy="25.500" r="10" fill="#6d9bd1" stroke="#3a659c" stroke-width="1.200"/><circle cx="22" cy="25.500" r="4.400" fill="#111"/><circle cx="19.500" cy="22.500" r="1.800" fill="#fff"/></svg>
<svg style="left:134.5px;top:669px" width="11" height="6" viewBox="0 0 11 6"><path d="M0,0H11L5.5,6Z" fill="#555"/></svg>
<svg style="left:160.5px;top:642.5px" width="31" height="31" viewBox="0 0 48 48"><path d="M3,4H45V11L29,26V46L19,41V26L3,11Z" fill="#6d9bd1" stroke="#2f5488" stroke-width="1.800" stroke-linejoin="round"/><path d="M4.500,5H43.500V10.500H4.500Z" fill="#fbe44d" stroke="#c9a30f" stroke-width="1"/></svg>
<svg style="left:184.5px;top:669px" width="11" height="6" viewBox="0 0 11 6"><path d="M0,0H11L5.5,6Z" fill="#555"/></svg>
<svg style="left:208px;top:640px" width="36" height="36" viewBox="0 0 48 48"><text x="4" y="30" font-family="'Liberation Serif',serif" font-size="46" fill="#6a2f80">ε</text><path d="M22,26H44V46H37L38,34L33,31L28,34L29,46H22Z" fill="#a8a8a8" stroke="#8a8a8a" stroke-width="1"/></svg>
<svg style="left:254px;top:654px" width="16" height="9" viewBox="0 0 16 9"><path d="M0,0H16L8,9Z" fill="#555"/></svg>
<svg style="left:302.5px;top:651px" width="17" height="14" viewBox="0 0 17 14"><path d="M1.5,1.5L7,7L1.5,12.500M9.500,1.5L15,7L9.500,12.500" fill="none" stroke="#333" stroke-width="2.100"/></svg>
<div class="w" style="left:-1px;top:690px;width:328px;height:637px;"></div>
<div style="left:0px;top:691px;width:326px;height:37px;background:#dcdcdc"></div>
<div style="left:0px;top:690px;width:326px;height:609px;overflow:hidden"><div class="cb" style="left:42px;top:7px;width:27.5px;height:27.5px;"></div><svg style="left:42px;top:7px" width="27.5" height="27.5" viewBox="0 0 27 27"><path d="M7.100,14.400L12.400,21.700L20.900,7.500" fill="none" stroke="#1e1e1e" stroke-width="3.100" stroke-linecap="butt" stroke-linejoin="round"/></svg><svg style="left:92px;top:13px" width="12" height="12" viewBox="0 0 12 12"><circle cx="6" cy="6.500" r="2.800" fill="#fff" stroke="#58c158" stroke-width="1.300"/></svg><div class="t" style="left:126px;top:1px;height:37px;line-height:37px;font-size:26.5px;font-weight:700;color:#000;text-decoration:underline;text-decoration-thickness:3.2px;text-underline-offset:3.5px;letter-spacing:0.5px">waste_by_station_september</div><svg style="left:44px;top:40px" width="29" height="32" viewBox="0 0 48 48" preserveAspectRatio="none"><rect x="2" y="2" width="44" height="44" rx="4" fill="#f3f3f3" stroke="#7e7e7e" stroke-width="2.600"/><path d="M2,12H46" stroke="#7e7e7e" stroke-width="1.600"/><g stroke="#8a8a8a" stroke-width="2.800"><path d="M8,7H18M24,7H40M8,19H18M24,19H40M8,27H18M24,27H40M8,35H18M24,35H40M8,42H18M24,42H40"/></g></svg><div class="t" style="left:87px;top:37px;height:37px;line-height:37px;font-size:26.5px;font-weight:700;color:#222;letter-spacing:0.42px">waste_disposal_september</div><div class="cb" style="left:42px;top:79px;width:27.5px;height:27.5px;"></div><svg style="left:93px;top:87px" width="10" height="10" viewBox="0 0 10 10"><circle cx="5" cy="5" r="2.6" fill="#7b1f87"/></svg><div class="t" style="left:127px;top:73.5px;height:37px;line-height:37px;font-size:26.5px;font-weight:700;color:#7d7d7d;font-style:italic;letter-spacing:0.55px">landfill_sites</div><div class="cb" style="left:42px;top:115px;width:27.5px;height:27.5px;"></div><svg style="left:42px;top:115px" width="27.5" height="27.5" viewBox="0 0 27 27"><path d="M7.100,14.400L12.400,21.700L20.900,7.500" fill="none" stroke="#1e1e1e" stroke-width="3.100" stroke-linecap="butt" stroke-linejoin="round"/></svg><div style="left:82px;top:112px;width:32px;height:32px;background:#a0a0a0"></div><div class="t" style="left:126.765px;top:110px;height:37px;line-height:37px;font-size:26.5px;font-weight:700;color:#222;letter-spacing:0.06px;">wards</div></div>
<div style="left:284px;top:766px;width:33px;height:33px;background:#fdfdfd;border:1px solid #d8d8d8;border-radius:4px"></div>
<svg style="left:287px;top:769px" width="27" height="27" viewBox="0 0 48 48"><path d="M5,8H43V13L29,26V44L19,38V26L5,13Z" fill="#f0f0f0" stroke="#6a6a6a" stroke-width="3" stroke-linejoin="round"/><path d="M6,14H42" stroke="#6a6a6a" stroke-width="2"/></svg>
<div class="sbh" style="left:0px;top:1299px;width:326px;height:28px;"></div>
<div style="left:-1px;top:1299px;width:24px;height:28px;border:1px solid #bdbdbd;background:linear-gradient(#fefefe,#f1f1f1)"></div>
<svg style="left:3px;top:1305.5px" width="8.5" height="15" viewBox="0 0 8.5 15"><path d="M8.5,0V15L0,7.5Z" fill="#555"/></svg>
<div class="th" style="left:124px;top:1299px;width:174px;height:28px;"></div>
<div style="left:298px;top:1299px;width:29px;height:28px;border:1px solid #bdbdbd;background:linear-gradient(#fefefe,#f1f1f1)"></div>
<svg style="left:308px;top:1305.5px" width="8.5" height="15" viewBox="0 0 8.5 15"><path d="M0,0V15L8.5,7.5Z" fill="#555"/></svg>
<svg style="left:333px;top:791px" width="3" height="34" viewBox="0 0 3 34"><rect x="0" y="0" width="2" height="2" fill="#bcbcbc"/><rect x="0" y="5" width="2" height="2" fill="#bcbcbc"/><rect x="0" y="10" width="2" height="2" fill="#bcbcbc"/><rect x="0" y="15" width="2" height="2" fill="#bcbcbc"/><rect x="0" y="20" width="2" height="2" fill="#bcbcbc"/><rect x="0" y="25" width="2" height="2" fill="#bcbcbc"/><rect x="0" y="30" width="2" height="2" fill="#bcbcbc"/></svg>
<svg style="left:1162px;top:791px" width="3" height="34" viewBox="0 0 3 34"><rect x="0" y="0" width="2" height="2" fill="#bcbcbc"/><rect x="0" y="5" width="2" height="2" fill="#bcbcbc"/><rect x="0" y="10" width="2" height="2" fill="#bcbcbc"/><rect x="0" y="15" width="2" height="2" fill="#bcbcbc"/><rect x="0" y="20" width="2" height="2" fill="#bcbcbc"/><rect x="0" y="25" width="2" height="2" fill="#bcbcbc"/><rect x="0" y="30" width="2" height="2" fill="#bcbcbc"/></svg>
<div style="left:340px;top:282px;width:813px;height:1047px;background:#fff;border:1px solid #b3b3b3"></div>
<svg style="left:342px;top:284px" width="810" height="1044" viewBox="342 284 810 1044">
<defs><radialGradient id="sb"><stop offset="0" stop-color="#ffffff"/><stop offset="0.12" stop-color="#e4f5e4"/><stop offset="0.55" stop-color="#86d086"/><stop offset="0.9" stop-color="#2db02d"/><stop offset="1" stop-color="#1fa51f"/></radialGradient></defs>
<defs><clipPath id="land"><path d="M560.6,308.6 L578.7,313.8 L590.4,317.2 L599.4,321.6 L611.1,330.1 L616.3,337.9 L624.3,344.9 L623.5,367.7 L639.6,370.3 L661.6,366.7 L673.2,375.5 L676.1,404 L666.8,408.6 L670.6,418.2 L675.8,424.7 L700.4,435.6 L710.8,434.5 L715.5,468.7 L721.2,480.4 L736.7,491.5 L745.8,489.9 L745.7,489.9 L758.6,505 L760.7,505 L778.8,525.2 L780.9,543.3 L793.1,543.3 L799.1,536.8 L816.4,547.7 L822.4,549.8 L836.3,538.1 L837.9,524.4 L843.6,525.7 L846.7,507 L860.4,507 L868.7,494.1 L901.9,498.5 L883.7,532.9 L874.7,541.2 L877.3,558.1 L876,571.8 L883,569.7 L888.9,569.7 L901.1,572.8 L900.6,582.7 L898,589.9 L904.5,599 L911.5,606.5 L890.2,609.9 L890.7,628 L887.6,632.4 L870,638.3 L890.2,655.1 L881.2,670.1 L866.9,681.3 L870.8,697.9 L851.4,705.6 L851.9,712.4 L843.6,714.2 L832.7,741.4 L831.2,759.5 L837.1,771.2 L835.8,779.7 L830.6,775 L822.9,780.2 L804.7,788 L802.2,795.8 L798.3,811.3 L812.5,815.2 L829.4,824.2 L824.2,834.6 L817.7,857.9 L815.1,865.7 L824.2,882.5 L829.4,885.1 L824.2,889 L835.8,904.5 L830.6,913.6 L826.8,922.7 L838.4,936.9 L851.4,947.3 L872.1,958.9 L886.3,960.2 L890.2,968 L894.1,958.9 L886.3,956.3 L898,944.7 L910.9,947.3 L918.7,952.4 L938.1,943.4 L938.1,939.5 L947.2,936.9 L949.8,930.4 L956.3,926.5 L960.1,929.9 L970.5,926.5 L988.6,916.2 L992.5,913.6 L989.9,909.7 L995.1,903.2 L999.8,900.1 L1011.9,903.2 L1022.3,908.4 L1039.1,921.4 L1039.1,956.3 L1041.7,958.9 L1036.5,974.5 L1033.4,982.9 L1036.5,992.8 L1052.6,940 L1071.5,984.2 L1036.5,1016.6 L1024.9,1033.5 L1014.5,1055.5 L1034.5,1057.5 L1034,1071 L1048.2,1073.6 L1032.7,1099.5 L1024.9,1095.6 L1024.9,1106 L1014.5,1112.4 L1006.8,1120.2 L1000.3,1121.5 L1001.6,1129.3 L993.3,1138.3 L989.9,1137.1 L982.2,1143.5 L973.1,1144.8 L974.4,1153.9 L967.9,1162.9 L951.1,1158.5 L955,1178.5 L944.6,1188.8 L942,1195.3 L932.9,1200.5 L925.2,1203.1 L930.4,1192.7 L932.2,1181.1 L930.4,1169.4 L918.7,1153.9 L909.6,1143.5 L910.9,1135.8 L899.3,1118.9 L898.5,1111.2 L905.8,1100.8 L916.1,1093 L935.5,1085.3 L943.3,1078.8 L940.7,1073.6 L932.9,1069.7 L925.2,1058.1 L918.7,1047.7 L909.6,1036 L900.6,1024.4 L890.2,1012.7 L877.3,1003.2 L864.3,997.2 L843.6,990.2 L817.7,985 L778.8,982.9 L740,981.7 L723.7,982.4 L697.8,985.5 L674,992 L546.3,1050.3 L541.2,1060.6 L545.6,1069.7 L539.9,1081.4 L537.3,1091.7 L533.4,1104.7 L534.7,1114.5 L545,1109.9 L552.8,1116.3 L561.9,1126.7 L568.3,1139.6 L572.2,1152.6 L580,1161.7 L578.7,1172 L580,1183.7 L573,1194 L572.2,1203.1 L578.7,1212.2 L572.2,1231.6 L568.3,1244.5 L565.8,1254.9 L569.6,1264 L573.5,1276.9 L581.3,1287.3 L590.4,1291.2 L600.2,1301.5 L583.9,1298.9 L578.7,1302.8 L572.2,1293.7 L565.8,1287.3 L558,1279.5 L550.2,1279.5 L537.3,1271.7 L529.5,1265.3 L521.7,1257.5 L510.1,1247.1 L514,1244.5 L502.3,1225.1 L497.9,1213.5 L490.1,1207 L492.7,1200.5 L489.4,1191.4 L490.6,1185 L486.8,1170.7 L489.4,1162.9 L486.8,1151.3 L480.8,1135.8 L482.9,1125.4 L471.2,1106 L460.9,1098.2 L455.7,1100.8 L450.5,1095.6 L441.4,1080.1 L433.2,1064.5 L438.8,1054.2 L447.9,1050.3 L453.9,1043.3 L458.3,1046.4 L464.7,1032.2 L468.6,1021.8 L467.9,1011.4 L462.2,1002.4 L467.9,995.9 L468.6,986.8 L475.1,980.4 L479,970 L477.7,969.3 L473.8,960.2 L471.2,953.7 L463.5,952.4 L458.3,957.6 L459.6,964.1 L454.4,968.8 L442.7,964.1 L438.8,955 L428.5,949.9 L423.8,944.7 L431.1,935.6 L427.2,931.7 L438.8,930.9 L444,927.8 L447.9,913.6 L453.1,908.4 L454.4,901.9 L457.5,891.6 L463.5,885.1 L475.1,876 L481.6,868.3 L482.9,857.9 L485.5,847.6 L484.2,834.6 L486.8,824.2 L488.1,815.2 L497.1,803.5 L506.2,795.8 L507.5,790.6 L514,787.5 L522.4,786.5 L524.2,790.6 L530.4,788.8 L540.4,785.2 L530.4,791.7 L526.8,793.8 L526,798.1 L530.4,796 L536.8,792.4 L539.7,793.8 L534.7,797.4 L548.3,810.7 L554.8,809.6 L559.1,806 L566.3,801.7 L570.9,800.9 L576.1,798.3 L581.3,790.6 L587.8,775 L591.7,759.5 L592.9,746.5 L591.7,731 L587.8,715.5 L581.3,699.9 L572.2,684.4 L563.2,675.3 L558,662.4 L552.8,648.1 L547.6,630 L546.3,618.9 L542.4,606 L541.9,599.5 L547.6,593 L548.9,582.7 L548.1,572.3 L544.5,556.8 L541.2,545.1 L537.3,534.7 L529.5,517.9 L521.7,503.7 L514,493.3 L508.8,482.9 L502.3,476 L494.5,474.4 L488.1,471.3 L482.9,464 L483.4,459.6 L477.7,451.9 L469.9,450.6 L472.5,444.1 L471.2,441.5 L466,429.9 L455.7,419.5 L454.4,405.8 L471.2,395.7 L471.2,387.9 L477.7,372.9 L486.8,362.5 L498.4,350.9 L511.4,356 L533.4,352.7 L545,339.2Z"/></clipPath></defs>
<path d="M560.6,308.6 L578.7,313.8 L590.4,317.2 L599.4,321.6 L611.1,330.1 L616.3,337.9 L624.3,344.9 L623.5,367.7 L639.6,370.3 L661.6,366.7 L673.2,375.5 L676.1,404 L666.8,408.6 L670.6,418.2 L675.8,424.7 L700.4,435.6 L710.8,434.5 L715.5,468.7 L721.2,480.4 L736.7,491.5 L745.8,489.9 L745.7,489.9 L758.6,505 L760.7,505 L778.8,525.2 L780.9,543.3 L793.1,543.3 L799.1,536.8 L816.4,547.7 L822.4,549.8 L836.3,538.1 L837.9,524.4 L843.6,525.7 L846.7,507 L860.4,507 L868.7,494.1 L901.9,498.5 L883.7,532.9 L874.7,541.2 L877.3,558.1 L876,571.8 L883,569.7 L888.9,569.7 L901.1,572.8 L900.6,582.7 L898,589.9 L904.5,599 L911.5,606.5 L890.2,609.9 L890.7,628 L887.6,632.4 L870,638.3 L890.2,655.1 L881.2,670.1 L866.9,681.3 L870.8,697.9 L851.4,705.6 L851.9,712.4 L843.6,714.2 L832.7,741.4 L831.2,759.5 L837.1,771.2 L835.8,779.7 L830.6,775 L822.9,780.2 L804.7,788 L802.2,795.8 L798.3,811.3 L812.5,815.2 L829.4,824.2 L824.2,834.6 L817.7,857.9 L815.1,865.7 L824.2,882.5 L829.4,885.1 L824.2,889 L835.8,904.5 L830.6,913.6 L826.8,922.7 L838.4,936.9 L851.4,947.3 L872.1,958.9 L886.3,960.2 L890.2,968 L894.1,958.9 L886.3,956.3 L898,944.7 L910.9,947.3 L918.7,952.4 L938.1,943.4 L938.1,939.5 L947.2,936.9 L949.8,930.4 L956.3,926.5 L960.1,929.9 L970.5,926.5 L988.6,916.2 L992.5,913.6 L989.9,909.7 L995.1,903.2 L999.8,900.1 L1011.9,903.2 L1022.3,908.4 L1039.1,921.4 L1039.1,956.3 L1041.7,958.9 L1036.5,974.5 L1033.4,982.9 L1036.5,992.8 L1052.6,940 L1071.5,984.2 L1036.5,1016.6 L1024.9,1033.5 L1014.5,1055.5 L1034.5,1057.5 L1034,1071 L1048.2,1073.6 L1032.7,1099.5 L1024.9,1095.6 L1024.9,1106 L1014.5,1112.4 L1006.8,1120.2 L1000.3,1121.5 L1001.6,1129.3 L993.3,1138.3 L989.9,1137.1 L982.2,1143.5 L973.1,1144.8 L974.4,1153.9 L967.9,1162.9 L951.1,1158.5 L955,1178.5 L944.6,1188.8 L942,1195.3 L932.9,1200.5 L925.2,1203.1 L930.4,1192.7 L932.2,1181.1 L930.4,1169.4 L918.7,1153.9 L909.6,1143.5 L910.9,1135.8 L899.3,1118.9 L898.5,1111.2 L905.8,1100.8 L916.1,1093 L935.5,1085.3 L943.3,1078.8 L940.7,1073.6 L932.9,1069.7 L925.2,1058.1 L918.7,1047.7 L909.6,1036 L900.6,1024.4 L890.2,1012.7 L877.3,1003.2 L864.3,997.2 L843.6,990.2 L817.7,985 L778.8,982.9 L740,981.7 L723.7,982.4 L697.8,985.5 L674,992 L546.3,1050.3 L541.2,1060.6 L545.6,1069.7 L539.9,1081.4 L537.3,1091.7 L533.4,1104.7 L534.7,1114.5 L545,1109.9 L552.8,1116.3 L561.9,1126.7 L568.3,1139.6 L572.2,1152.6 L580,1161.7 L578.7,1172 L580,1183.7 L573,1194 L572.2,1203.1 L578.7,1212.2 L572.2,1231.6 L568.3,1244.5 L565.8,1254.9 L569.6,1264 L573.5,1276.9 L581.3,1287.3 L590.4,1291.2 L600.2,1301.5 L583.9,1298.9 L578.7,1302.8 L572.2,1293.7 L565.8,1287.3 L558,1279.5 L550.2,1279.5 L537.3,1271.7 L529.5,1265.3 L521.7,1257.5 L510.1,1247.1 L514,1244.5 L502.3,1225.1 L497.9,1213.5 L490.1,1207 L492.7,1200.5 L489.4,1191.4 L490.6,1185 L486.8,1170.7 L489.4,1162.9 L486.8,1151.3 L480.8,1135.8 L482.9,1125.4 L471.2,1106 L460.9,1098.2 L455.7,1100.8 L450.5,1095.6 L441.4,1080.1 L433.2,1064.5 L438.8,1054.2 L447.9,1050.3 L453.9,1043.3 L458.3,1046.4 L464.7,1032.2 L468.6,1021.8 L467.9,1011.4 L462.2,1002.4 L467.9,995.9 L468.6,986.8 L475.1,980.4 L479,970 L477.7,969.3 L473.8,960.2 L471.2,953.7 L463.5,952.4 L458.3,957.6 L459.6,964.1 L454.4,968.8 L442.7,964.1 L438.8,955 L428.5,949.9 L423.8,944.7 L431.1,935.6 L427.2,931.7 L438.8,930.9 L444,927.8 L447.9,913.6 L453.1,908.4 L454.4,901.9 L457.5,891.6 L463.5,885.1 L475.1,876 L481.6,868.3 L482.9,857.9 L485.5,847.6 L484.2,834.6 L486.8,824.2 L488.1,815.2 L497.1,803.5 L506.2,795.8 L507.5,790.6 L514,787.5 L522.4,786.5 L524.2,790.6 L530.4,788.8 L540.4,785.2 L530.4,791.7 L526.8,793.8 L526,798.1 L530.4,796 L536.8,792.4 L539.7,793.8 L534.7,797.4 L548.3,810.7 L554.8,809.6 L559.1,806 L566.3,801.7 L570.9,800.9 L576.1,798.3 L581.3,790.6 L587.8,775 L591.7,759.5 L592.9,746.5 L591.7,731 L587.8,715.5 L581.3,699.9 L572.2,684.4 L563.2,675.3 L558,662.4 L552.8,648.1 L547.6,630 L546.3,618.9 L542.4,606 L541.9,599.5 L547.6,593 L548.9,582.7 L548.1,572.3 L544.5,556.8 L541.2,545.1 L537.3,534.7 L529.5,517.9 L521.7,503.7 L514,493.3 L508.8,482.9 L502.3,476 L494.5,474.4 L488.1,471.3 L482.9,464 L483.4,459.6 L477.7,451.9 L469.9,450.6 L472.5,444.1 L471.2,441.5 L466,429.9 L455.7,419.5 L454.4,405.8 L471.2,395.7 L471.2,387.9 L477.7,372.9 L486.8,362.5 L498.4,350.9 L511.4,356 L533.4,352.7 L545,339.2Z" fill="#a0a0a0" stroke="#b2b2b2" stroke-width="1.2" stroke-linejoin="round"/>
<path d="M473.8,665 L479,663.7 L484.2,667.6 L488.1,672.7 L487.5,679.2 L490.6,685.7 L492.7,692.2 L490.6,696 L482.4,698.6 L476.4,696 L472,690.9 L469.9,680.5 L469.4,674Z" fill="#a0a0a0" stroke="#b2b2b2" stroke-width="1.2"/>
<g clip-path="url(#land)"><path d="M509.3,485.5 L518.6,453.7 L541.2,476.5 L545.6,483.7 L548.1,482.9 L550.7,472.6 L556.7,462.2 L558,448 L565.8,437.6 L570.9,434.5 L578.7,427.3 L581.3,419 L589.1,424.7 L598.1,410.4 L596.3,397.5 L590.4,394.9 L594.8,388.4 L607.2,396.2 L618.8,401.4 L626.6,391 L630.5,396.7 L637,397.5 L646.8,387.9 L640.9,379.4 L642.2,372.9 L639.6,370.3 M703.5,435.6 L678.4,481.7 L655.1,524.4 L649.9,542.5 L645.5,560.6 L642.2,577.5 L644.7,613.7 L647.3,650 M545,556.2 L561.9,542.5 L581.3,525.7 L594.2,518.7 L599.9,517.4 L607.2,532.2 L608,569.7 L611.1,586.5 L616.8,589.1 L630,569.7 L645.5,560.6 M646,630 L647.9,655.9 L646.6,680.5 L642.2,694.7 L637,712.9 L631.8,731 L630,749.1 L630.5,771.2 L634.4,790.6 L640.9,806.1 L642.7,826.8 L642.2,850.1 M573,684.4 L580.5,670.7 L586.5,681.8 L596.8,677.9 L615,675.3 L631.3,674 L633.9,672.7 L637,678.7 L646.6,681.8 L656.4,683.1 L655.9,699.4 L674.5,719.4 L697.8,705.1 L710.8,706.4 L717.3,709 L728.9,702.5 L723.7,690.9 L732.8,689.1 L738,698.6 L747.1,705.1 L760,698.6 M581.3,699.9 L592.9,703.8 L604.6,693.5 L616.3,684.4 L624,701.2 L634.4,696.8 L638.3,707.7 M599.4,740.1 L605.9,733.6 L617.6,728.4 L622.7,727.1 L631.8,730.5 M592.9,756.1 L599.4,758.7 L609.8,763.4 L623.3,764.7 L622.2,775 L581.3,808.7 L559.3,812.6 M581.3,808.7 L580.5,816.5 L640.9,807.4 M630,771.2 L648.6,777.6 L662.9,775 L687.5,771.2 L695.3,775 L723.7,775 L760,758.2 M655.9,699.4 L651.2,707.7 L652.5,725.8 L656.4,751.7 L646.8,767.3 L649.9,776.3 M674.5,719.4 L682.3,736.2 L690.1,751.7 L695.3,775 M717.3,709 L726.3,727.1 L734.1,741.4 L731.5,756.9 L723.7,781.5 M760,920.1 L723.7,899.4 L684.9,878.6 L661.6,863.1 L640.9,851.4 L604.6,845 L596.8,847.6 L586.5,837.2 L587,829.4 L580.5,816.5 M543.7,825.5 L546.3,832 L546.3,847.6 L551.5,848.8 L516.5,881.2 L511.4,878.6 L506.2,870.9 L515.3,860.5 L497.1,826.8 L508.8,810 L521.7,803.5 L524.3,808.7 L514,821.7 L521.7,826.8 L533.4,821.7 L543.7,825.5 L555.4,822.9 L569.6,819.1 L580.5,822.9 M551.5,848.8 L561.9,850.1 L573.5,850.1 L581.3,845 L586.5,837.2 M573.5,901.9 L594.2,901.9 L621.4,900.6 L659,901.9 L684.9,899.4 L705.6,896.8 L723.7,905.8 M514,909.7 L512.7,896.8 L521.7,891.6 L514,879.9 M454.4,901.9 L469.9,899.4 L484.2,904.5 L488.1,899.4 L503.6,908.4 L514,909.7 L512.7,920.1 L514,926.5 L526.9,939.5 L541.2,936.9 L548.9,948.6 M482.9,952.4 L493.2,927.8 L507.5,918.8 L512.7,920.1 M548.9,948.6 L550.2,935.6 L559.3,916.2 L568.3,917.5 L573.5,925.3 L573.5,901.9 M621.4,900.6 L624,914.9 L622.7,930.4 M594.2,901.9 L599.4,904.5 L596.8,914.9 L598.1,927.8 M723.7,905.8 L710.8,920.1 L674.5,926.5 L659,909.7 L656.4,894.2 L656.4,873.5 L659,868.3 M705.6,896.8 L706.9,886.4 L713.4,863.1 L719.9,845 L723.7,837.2 M699.1,837.2 L722.4,821.7 M692.7,786.7 L699.1,837.2 L682.3,839.8 L681,850.1 L686.2,857.9 L684.9,878.6 M692.7,786.7 L721.2,786.7 L723.7,781.5 L734.1,782.8 L736.7,793.2 M573.5,901.9 L572.2,891.6 L576.1,886.4 L572.2,876 L581.3,863.1 L585.2,845 M591.7,901.9 L592.9,881.2 L596.8,860.5 L596.8,847.6 M604.6,845 L604.6,878.6 L607.2,889 L612.4,889 L620.1,896.8 L621.4,900.6 M609.8,857.9 L633.1,861.8 L656.4,868.3 M615,859.2 L616.3,874.7 L637,879.9 L638.3,886.4 L649.9,881.2 L655.1,872.2 M482.9,952.4 L486.8,969.3 L494.5,990 M744.5,850.1 L747.1,878.6 L736.7,891.6 L723.7,905.8 M718.6,846.3 L744.5,847.6 L753.5,798.3 L760,795.8 M695.3,926.5 L697.8,948.6 L692.7,964.1 L705.6,974.5 M674.5,926.5 L682.3,948.6 L690.1,966.7 L700.4,977.1 L723.7,984.8 M723.7,905.8 L727.6,920.1 L747.1,917.5 M718.6,953.7 L728.9,966.7 L739.3,977.1 M640.9,826.8 L659,822.9 L679.7,821.7 L681,812.6 L694,808.7 M653.8,791.9 L664.2,789.3 L666.8,795.8 L692.7,793.2 M653.8,791.9 L656.4,800.9 L661.6,811.3 L681,812.6 M669.4,876 L670.6,899.4 M678.4,881.2 L677.1,899.4 M661.6,909.7 L679.7,908.4 L681,924 M700.4,908.4 L701.7,921.4 M728.9,935.6 L744.5,934.3 L745.8,951.2 L760,949.9 M705.6,948.6 L718.6,953.7 L721.2,940.8 L728.9,935.6 M740,706.4 L747.8,702.5 L758.1,698.6 L759.4,702.5 L768.5,698.6 L782.7,688.3 L795.7,676.6 L797.5,671.4 L797,679.2 L811.2,680.5 L809.9,670.1 L841,665.7 L859.7,683.9 M782.7,688.3 L786.6,710.3 L784,733.6 L772.4,742.7 L772.4,750.4 M740,766 L760.7,756.1 L800.9,724.5 M760.7,756.1 L765.9,775 L767.2,785.4 L758.1,803.5 L751.7,821.7 L747.8,850.1 L745.2,876 M778.8,764.7 L811.2,738.8 L819.8,755.6 L813.8,767.3 L822.9,780.2 M763.3,763.4 L771.1,763.4 L772.4,766 L778.8,764.7 L791.8,766 L798.3,775 L800.9,785.4 L802.2,795.8 M740,793.2 L750.4,798.3 L765.9,811.3 L786.6,803.5 L791.8,813.9 L798.3,811.3 M791.8,813.9 L787.4,820.4 L786.6,834.6 L784,837.2 L789.2,843.7 L780.1,846.3 L772.4,839.8 L755.5,834.6 M780.1,846.3 L775,852.7 L772.4,868.3 L775,882.5 L778.8,883.8 L777.6,903.2 L781.4,914.9 L780.1,927.8 M781.4,914.9 L812.5,900.6 L826.8,922.7 L815.1,935.6 L803.5,960.2 L822.9,977.1 L825.5,990 M740,908.4 L749.1,914.9 L809.9,944.7 M778.8,883.8 L786.6,878.6 L787.9,883.8 L793.1,885.1 L795.7,891.6 L806,885.1 L811.2,891.6 L812.5,900.6 M772.4,857.9 L764.6,859.2 L763.3,864.4 L755,866.2 L755.5,877.3 L771.1,903.2 L777.6,903.2 M872.1,958.9 L879.9,969.3 L869.5,990 M938.1,943.4 L942,951.2 L943.3,971.9 L943.3,990 M740,878.6 L755.5,877.3 M780.1,927.8 L787.9,935.6 L778.8,948.6 L803.5,957.6 M745.2,935.6 L764.6,933 L767.2,940.8 L747.8,949.9 L745.2,935.6 M747.8,949.9 L759.4,964.1 L772.4,970.6 L773.7,961.5 L786.6,960.2 L778.8,982.2 M758.1,698.6 L760.7,707.7 L759.4,719.4 L758.1,733.6 L756.8,754.3 M740,723.2 L759.4,719.4 M488.1,970 L499.7,985.5 L514,998.5 L529.5,1010.1 L516.5,1016.6 L515.3,1020.5 L521.7,1030.9 L532.1,1023.1 M521.7,1030.9 L511.4,1028.3 L512.7,1039.9 L510.1,1046.4 L516.5,1054.2 L541.9,1074.9 M458.3,1046.4 L463.5,1059.4 L480.3,1052.9 L481.6,1060.6 L497.9,1070.5 L516.5,1054.2 M692.7,970 L705.6,977.8 L708.2,982.9 M714.7,970 L717.3,980.4 L739.3,981.7 M879.9,970 L865.6,992 L872.1,994.6 L873.4,997.2 L878.6,998.5 L877.3,1003.2 M879.9,969.2 L918.7,993.3 L914.8,997.2 L927.8,1012.7 L939.4,1023.1 L951.1,1032.2 L965.3,1038.6 L995.1,1051.6 L1001.6,1050.3 L1004.2,1043.8 L1008.1,1047.7 L1006.8,1055.5 L1001.6,1059.4 L1000.3,1068.4 L1009.4,1071 L1024.9,1069.7 L1034,1071 M918.7,993.3 L921.3,985.5 L925.2,980.4 L931.7,981.7 L936.8,984.2 L943.3,977.8 L942,970 M927.8,1012.7 L918.7,1023.1 L920,1032.2 L914.8,1036 L909.6,1033.5 M939.4,1023.1 L934.2,1028.3 L934.8,1036 L929.1,1039.9 L930.4,1046.4 L924.4,1052.9 L925.2,1058.1 M934.8,1036 L938.1,1039.9 L951.1,1032.2 M781.4,970 L784,977.8 L778.8,982.9 M812.5,970 L824.2,977.8 L822.9,984.2" fill="none" stroke="#cdcdcd" stroke-width="1.7" stroke-linejoin="round" stroke-linecap="round"/></g>
<path d="M545,791.3L552,795.3L559,805.5M542.5,797.5L551.5,806.5" fill="none" stroke="#a8a8a8" stroke-width="1.6"/>
<circle cx="602.8" cy="1000.7" r="71.4" fill="url(#sb)"/>
<circle cx="822.9" cy="718.8" r="21" fill="url(#sb)"/>
<circle cx="738.5" cy="822.4" r="17.2" fill="url(#sb)"/>
</svg>
<div class="t" style="left:1174.5px;top:286px;height:30px;line-height:30px;font-size:21.5px;font-weight:400;color:#222;letter-spacing:0.94px;">Layer Styling</div>
<div style="left:2002px;top:290px;width:22px;height:22px;border:2px solid #6f6d68;border-radius:4px;background:#f1f1f1"></div><div style="left:2030px;top:290px;width:22px;height:22px;border:2px solid #6f6d68;border-radius:4px;background:#f1f1f1"></div><svg style="left:2002px;top:290px" width="22" height="22" viewBox="0 0 22 22"><path d="M9.200,7.500V5.300H16.800V12.500H14" fill="none" stroke="#6f6d68" stroke-width="2"/><rect x="5.100" y="9.200" width="7.600" height="7.600" fill="none" stroke="#6f6d68" stroke-width="2"/></svg><svg style="left:2030px;top:290px" width="22" height="22" viewBox="0 0 22 22"><path d="M5.300,5.300L16.700,16.700M16.700,5.300L5.300,16.700" stroke="#6f6d68" stroke-width="3.400"/></svg>
<div class="combo" style="left:1172px;top:327px;width:878px;height:47px;"></div>
<svg style="left:1184px;top:336px" width="30" height="30" viewBox="0 0 30 30"><g fill="#fff" stroke="#666" stroke-width="1.3"><circle cx="6" cy="8" r="2"/><circle cx="20" cy="3.5" r="2"/><circle cx="3.5" cy="22" r="2"/></g></svg>
<div class="t" style="left:1222.26px;top:333px;height:36px;line-height:36px;font-size:26px;font-weight:400;color:#111;letter-spacing:0.77px;">waste_by_station_september _2023</div>
<svg style="left:2019px;top:346px" width="16" height="8" viewBox="0 0 16 8"><path d="M0,0H16L8,8Z" fill="#444"/></svg>
<svg style="left:1184px;top:395px" width="46" height="46" viewBox="0 0 48 48"><defs><linearGradient id="sbg1" x1="0" y1="0" x2="1" y2="0"><stop offset="0" stop-color="#fdf08a"/><stop offset="1" stop-color="#f1cf2c"/></linearGradient><linearGradient id="sbg2" x1="0" y1="0" x2="1" y2="0"><stop offset="0" stop-color="#9cc4f0"/><stop offset="1" stop-color="#4a86d0"/></linearGradient><linearGradient id="sbg3" x1="0" y1="0" x2="1" y2="0"><stop offset="0" stop-color="#f8a0a0"/><stop offset="1" stop-color="#e0282a"/></linearGradient></defs><path d="M11,9L33,17L27,33L5,22Z" fill="url(#sbg1)"/><path d="M7,17L30,25L25,38L3,29Z" fill="url(#sbg2)"/><path d="M4,27L27,33L25,42L1,35Z" fill="url(#sbg3)"/><path d="M31,21L45,5" stroke="#a8651c" stroke-width="5.600" stroke-linecap="round"/><path d="M31,21L45,5" stroke="#e8a44c" stroke-width="3.200" stroke-linecap="round"/><path d="M16,27L29,16L38,25L27,40Z" fill="#deb87a" stroke="#8a6a2c" stroke-width="1.400" stroke-linejoin="round"/><path d="M26,19L35,28" stroke="#8a6a2c" stroke-width="2.200"/><path d="M19,29L28,38M22,26.500L31,35.500M17.500,31L25.500,39" stroke="#b8904c" stroke-width=".9"/></svg>
<div class="combo" style="left:1254px;top:398px;width:796px;height:47px;"></div>
<svg style="left:1269px;top:408px" width="27" height="28" viewBox="0 0 27 28"><g fill="#12a660" stroke="#0a6b3c" stroke-width="1.2"><rect x="1" y="1" width="21" height="6"/><rect x="5" y="11" width="21" height="6"/><rect x="1" y="21" width="21" height="6"/></g></svg>
<div class="t" style="left:1305.0px;top:405px;height:36px;line-height:36px;font-size:26px;font-weight:400;color:#111;letter-spacing:0.41px;">Single Symbol</div>
<svg style="left:2019px;top:418px" width="16" height="8" viewBox="0 0 16 8"><path d="M0,0H16L8,8Z" fill="#444"/></svg>
<div style="left:1172px;top:450px;width:76px;height:874px;background:#5d5d5d"></div>
<svg style="left:1179px;top:459px" width="46" height="46" viewBox="0 0 48 48"><path d="M1.500,24L8.500,12.500H46.500V35.500H8.500Z" fill="#f6d838" stroke="#c9a30f" stroke-width="2" stroke-linejoin="round"/><text x="27.300" y="31" text-anchor="middle" font-family="'Liberation Sans',sans-serif" font-weight="700" font-size="19.500" fill="#1a1a1a">abc</text></svg>
<svg style="left:1178px;top:520px" width="48" height="48" viewBox="0 0 48 48"><path d="M10,12C4,12 1,18 3,24C1,30 4,36 10,36H38C44,36 47,30 45,24C47,18 44,12 38,12C30,9 18,9 10,12Z" fill="#e6eefb" stroke="#c6d2ea" stroke-width="1.500"/><text x="24" y="31" text-anchor="middle" font-family="'Liberation Sans',sans-serif" font-weight="700" font-size="21" fill="#222">abc</text></svg>
<svg style="left:1179px;top:587px" width="46" height="46" viewBox="0 0 48 48"><path d="M24,3L45,14L24,26L3,14Z" fill="#f08a8a" stroke="#b01818" stroke-width="2" stroke-linejoin="round"/><path d="M3,14L24,26V46L3,34Z" fill="#86d84a" stroke="#3a8a12" stroke-width="2" stroke-linejoin="round"/><path d="M45,14L24,26V46L45,34Z" fill="#f4dc3c" stroke="#b89a12" stroke-width="2" stroke-linejoin="round"/></svg>
<svg style="left:1179px;top:651px" width="46" height="46" viewBox="0 0 48 48"><rect x="14.500" y="1" width="19" height="12" fill="#f05a5a" stroke="#c83a3a" stroke-width="1"/><path d="M16,2V12M18.500,2V12M21,2V12M23.500,2V12M26,2V12M28.500,2V12M31,2V12" stroke="#f8a0a0" stroke-width=".8"/><path d="M14,12.500H34V17H27V20H21V17H14Z" fill="#d99a3c" stroke="#a8701c" stroke-width=".8"/><path d="M22.500,20H25.500V38H22.500Z" fill="#e3a84c" stroke="#a8701c" stroke-width=".8"/><path d="M9,20H39V23.500H9Z" fill="#e3a84c" stroke="#a8701c" stroke-width=".8"/><path d="M10,8H13V30H10ZM35,8H38V30H35Z" fill="#e3a84c" stroke="#a8701c" stroke-width=".8"/><path d="M3,30H20V35H3ZM28,30H45V35H28Z" fill="#d99a3c" stroke="#a8701c" stroke-width=".8"/><rect x="2" y="34.500" width="19" height="12" fill="#fbe44d" stroke="#d9b82a" stroke-width="1"/><rect x="27" y="34.500" width="19" height="12" fill="#8fbcf0" stroke="#5a8ad0" stroke-width="1"/><path d="M5,36V46M8,36V46M11,36V46M14,36V46M17,36V46" stroke="#fff8c0" stroke-width=".8"/><path d="M30,36V46M33,36V46M36,36V46M39,36V46M42,36V46" stroke="#d0e4fa" stroke-width=".8"/></svg>
<svg style="left:1183px;top:718px" width="42" height="42" viewBox="0 0 48 48"><path d="M4,27C2,17 8,12 17,12V5L29,16L17,27V20C12,20 10,23 12,27Z" fill="#7fc68a" stroke="#4aa85c" stroke-width="1.200" stroke-linejoin="round"/><path d="M44,41C47,30 41,25 31,25V18L19,29L31,40V33C37,33 38,37 36,41L40,45Z" fill="#f08a3c" stroke="#d8701c" stroke-width="1.200" stroke-linejoin="round"/></svg>
<div style="left:1354px;top:470px;width:2px;height:200px;background:#a8a8a8"></div>
<div style="left:1254px;top:569.5px;width:200px;height:2px;background:#a8a8a8"></div>
<div class="w" style="left:1466px;top:458px;width:448px;height:223px;"></div>
<div style="left:1468px;top:568px;width:444px;height:36px;background:#dcdcdc"></div>
<svg style="left:1480.25px;top:474px" width="15.5" height="8" viewBox="0 0 15.5 8"><path d="M0,0H15.5L7.75,8Z" fill="#555"/></svg>
<svg style="left:1520.25px;top:510px" width="15.5" height="8" viewBox="0 0 15.5 8"><path d="M0,0H15.5L7.75,8Z" fill="#555"/></svg>
<svg style="left:1560.25px;top:546px" width="15.5" height="8" viewBox="0 0 15.5 8"><path d="M0,0H15.5L7.75,8Z" fill="#555"/></svg>
<svg style="left:1522px;top:470.500px" width="18" height="18" viewBox="0 0 18 18"><circle cx="9" cy="9" r="7" fill="#9bdb9b"/><circle cx="9" cy="9" r="6" fill="#62c462"/><circle cx="9" cy="9" r="3.600" fill="#a8e0a8"/><rect x="7" y="7" width="4" height="4" fill="#f4fbf4"/></svg>
<div class="t" style="left:1559.0px;top:460px;height:36px;line-height:36px;font-size:26px;font-weight:700;color:#222;letter-spacing:0.84px;">Marker</div>
<div class="t" style="left:1598.5px;top:496px;height:36px;line-height:36px;font-size:26px;font-weight:400;color:#222;letter-spacing:0.32px;">Filled Marker</div>
<svg style="left:1594px;top:534px" width="32" height="32" viewBox="0 0 32 32"><rect x="0" y="0" width="32" height="32" fill="#23ab23"/><rect x="3" y="3" width="26" height="26" fill="#4cbb4c"/><rect x="6" y="6" width="20" height="20" fill="#6fc96f"/><rect x="9" y="9" width="14" height="14" fill="#94d794"/><rect x="11.5" y="11.5" width="9.0" height="9.0" fill="#bce6bc"/><rect x="13.5" y="13.5" width="5.0" height="5.0" fill="#ffffff"/></svg>
<div class="t" style="left:1638.5px;top:532px;height:36px;line-height:36px;font-size:26px;font-weight:700;color:#222;letter-spacing:-0.25px;">Fill</div>
<svg style="left:1634px;top:570px" width="32" height="32" viewBox="0 0 32 32"><rect x="0" y="0" width="32" height="32" fill="#23ab23"/><rect x="3" y="3" width="26" height="26" fill="#4cbb4c"/><rect x="6" y="6" width="20" height="20" fill="#6fc96f"/><rect x="9" y="9" width="14" height="14" fill="#94d794"/><rect x="11.5" y="11.5" width="9.0" height="9.0" fill="#bce6bc"/><rect x="13.5" y="13.5" width="5.0" height="5.0" fill="#ffffff"/></svg>
<div class="t" style="left:1678.5px;top:568px;height:36px;line-height:36px;font-size:26px;font-weight:400;color:#111;letter-spacing:0.42px;">Shapeburst Fill</div>
<div class="btn" style="left:1926.5px;top:458.5px;width:55px;height:47px;border:2px solid #adadad;border-radius:6px"></div>
<svg style="left:1939px;top:467px" width="30" height="30" viewBox="0 0 48 48"><path d="M17,3H31V17H45V31H31V45H17V31H3V17H17Z" fill="#fff" stroke="#4f8f55" stroke-width="2.600" stroke-linejoin="miter"/><path d="M21,7.500H27V21H40.500V27H27V40.500H21V27H7.500V21H21Z" fill="#5a9460"/></svg>
<div class="btn" style="left:1994.5px;top:458.5px;width:55px;height:47px;border:2px solid #cdcdcd;border-radius:6px"></div>
<svg style="left:2007px;top:467px" width="30" height="30" viewBox="0 0 48 48"><path d="M24,7L45,38H3Z" fill="#d6d9db" stroke="#c2c5c7" stroke-width="1.500" stroke-linejoin="round"/></svg>
<div class="btn" style="left:1926.5px;top:514.5px;width:55px;height:47px;border:2px solid #cdcdcd;border-radius:6px"></div>
<svg style="left:1939px;top:523px" width="30" height="30" viewBox="0 0 48 48"><rect x="3.500" y="16.500" width="41" height="15" fill="#f6f2f2" stroke="#e0d2d2" stroke-width="2.200"/><rect x="9" y="21.500" width="30" height="5" fill="#e6d8d8"/></svg>
<div class="btn" style="left:1994.5px;top:514.5px;width:55px;height:47px;border:2px solid #cdcdcd;border-radius:6px"></div>
<svg style="left:2007px;top:523px" width="30" height="30" viewBox="0 0 48 48"><path d="M24,41L45,10H3Z" fill="#d6d9db" stroke="#c2c5c7" stroke-width="1.500" stroke-linejoin="round"/></svg>
<div class="btn" style="left:1926.5px;top:570.5px;width:55px;height:47px;border:2px solid #adadad;border-radius:6px"></div>
<svg style="left:1939px;top:579px" width="30" height="30" viewBox="0 0 48 48"><rect x="4" y="11" width="32" height="33" fill="#9a9a94" stroke="#5a5a58" stroke-width="2.200"/><rect x="10" y="5" width="34" height="33" fill="#ececea" stroke="#8a8a84" stroke-width="2.200"/><rect x="29" y="28" width="18" height="18" rx="3.2" fill="#c4a000"/><rect x="30" y="33.0" width="16" height="5.4" fill="#d8bb3a" opacity=".55"/><path d="M38.0,30.9L38.0,43.1M43.3,33.9L32.7,40.1M43.3,40.1L32.7,33.9" stroke="#fff" stroke-width="3.1" stroke-linecap="round"/></svg>
<div class="btn" style="left:1994.5px;top:570.5px;width:55px;height:47px;border:2px solid #adadad;border-radius:6px"></div>
<svg style="left:2007px;top:579px" width="30" height="30" viewBox="0 0 48 48"><path d="M14,12C16,2 36,0 37,14V22" fill="none" stroke="#8a8a86" stroke-width="4.200"/><path d="M14,12C16,2 36,0 37,14V22" fill="none" stroke="#e6e6e4" stroke-width="1.600"/><rect x="7" y="21.500" width="34" height="22" rx="3" fill="#f1de24" stroke="#c8a60a" stroke-width="2.200"/></svg>
<div style="left:1254px;top:694px;width:796px;height:2px;background:#d6d6d6"></div>
<div style="left:1273.5px;top:724px;width:28px;height:28px;background:#fff;border:1px solid #a9a9a9;border-radius:50%;box-shadow:inset 0 1px 2px rgba(0,0,0,.12)"></div><div style="left:1281.0px;top:731.5px;width:13px;height:13px;background:#2b2b2b;border-radius:50%"></div>
<div class="t" style="left:1315.5px;top:720.7px;height:36px;line-height:36px;font-size:26px;font-weight:400;color:#222;letter-spacing:0.23px;">Whole shape</div>
<svg style="left:1949px;top:719px" width="38" height="38" viewBox="0 0 48 48"><path d="M3,24L14,11V37Z" fill="#8e8e8e" stroke="#6e6e66" stroke-width="1.500" stroke-linejoin="round"/><rect x="14.500" y="5" width="32" height="38" fill="#f8f8f8" stroke="#7a7a72" stroke-width="2.600"/><path d="M14.500,24H46.500" stroke="#7a7a72" stroke-width="2.400"/><path d="M22,14.500H39" stroke="#55555a" stroke-width="4.400" stroke-linecap="round"/><path d="M22,33.500H39" stroke="#55555a" stroke-width="2.400"/></svg><svg style="left:1992.5px;top:746.5px" width="9" height="5" viewBox="0 0 9 5"><path d="M0,0H9L4.5,5Z" fill="#333"/></svg>
<div style="left:1273.5px;top:788px;width:28px;height:28px;background:#fff;border:1px solid #a9a9a9;border-radius:50%;box-shadow:inset 0 1px 2px rgba(0,0,0,.12)"></div>
<div class="t" style="left:1315.5px;top:784.7px;height:36px;line-height:36px;font-size:26px;font-weight:400;color:#222;letter-spacing:0.45px;">Set distance</div>
<div class="inp" style="left:1488px;top:779px;width:186px;height:44px;"></div>
<div style="left:1643px;top:780px;width:1px;height:42px;background:#c4c4c4"></div>
<div style="left:1644px;top:780px;width:29px;height:42px;background:linear-gradient(#fcfcfc,#f0f0f0);border-radius:0 4px 4px 0"></div>
<svg style="left:1651px;top:788px" width="14" height="8" viewBox="0 0 14 8"><path d="M0,8H14L7,0Z" fill="#444"/></svg>
<svg style="left:1651px;top:806px" width="14" height="8" viewBox="0 0 14 8"><path d="M0,0H14L7,8Z" fill="#444"/></svg>
<div class="t" style="left:1499.5px;top:784px;height:36px;line-height:36px;font-size:26px;font-weight:400;color:#a6a6a6;letter-spacing:1.10px;">5.00</div>
<div class="combo" style="left:1687px;top:779px;width:245px;height:46px;"></div>
<div class="t" style="left:1697.5px;top:785px;height:36px;line-height:36px;font-size:26px;font-weight:400;color:#8e8e8e;letter-spacing:0.56px;">Millimeters</div>
<svg style="left:1900px;top:797px" width="16" height="8" viewBox="0 0 16 8"><path d="M0,0H16L8,8Z" fill="#9a9a9a"/></svg>
<svg style="left:1949px;top:783px" width="38" height="38" viewBox="0 0 48 48"><path d="M3,24L14,11V37Z" fill="#8e8e8e" stroke="#6e6e66" stroke-width="1.500" stroke-linejoin="round"/><rect x="14.500" y="5" width="32" height="38" fill="#f8f8f8" stroke="#7a7a72" stroke-width="2.600"/><path d="M14.500,24H46.500" stroke="#7a7a72" stroke-width="2.400"/><path d="M22,14.500H39" stroke="#55555a" stroke-width="4.400" stroke-linecap="round"/><path d="M22,33.500H39" stroke="#55555a" stroke-width="2.400"/></svg><svg style="left:1992.5px;top:810.5px" width="9" height="5" viewBox="0 0 9 5"><path d="M0,0H9L4.5,5Z" fill="#333"/></svg>
<div class="cb" style="left:1274px;top:853px;width:28px;height:27px;"></div>
<div class="t" style="left:1313.5px;top:849px;height:36px;line-height:36px;font-size:26px;font-weight:400;color:#222;letter-spacing:0.52px;">Ignore rings in polygons while shading</div>
<div style="left:1940px;top:846px;width:70px;height:36px;overflow:hidden"><svg style="left:9px;top:1px" width="38" height="38" viewBox="0 0 48 48"><path d="M3,24L14,11V37Z" fill="#8e8e8e" stroke="#6e6e66" stroke-width="1.500" stroke-linejoin="round"/><rect x="14.500" y="5" width="32" height="38" fill="#f8f8f8" stroke="#7a7a72" stroke-width="2.600"/><path d="M14.500,24H46.500" stroke="#7a7a72" stroke-width="2.400"/><path d="M22,14.500H39" stroke="#55555a" stroke-width="4.400" stroke-linecap="round"/><path d="M22,33.500H39" stroke="#55555a" stroke-width="2.400"/></svg><svg style="left:52.5px;top:28.5px" width="9" height="5" viewBox="0 0 9 5"><path d="M0,0H9L4.5,5Z" fill="#333"/></svg></div>
<div class="sb" style="left:2023px;top:712px;width:27px;height:170px;"></div>
<div style="left:2023px;top:712px;width:27px;height:26px;border:1px solid #bdbdbd;background:linear-gradient(#fefefe,#f1f1f1)"></div>
<svg style="left:2028.5px;top:720.5px" width="16" height="9" viewBox="0 0 16 9"><path d="M0,9H16L8,0Z" fill="#444"/></svg>
<div class="th" style="left:2023px;top:740px;width:27px;height:32px;"></div>
<div class="th" style="left:2023px;top:826px;width:27px;height:26px;"></div>
<div style="left:2023px;top:854px;width:27px;height:28px;border:1px solid #bdbdbd;background:linear-gradient(#fefefe,#f1f1f1)"></div>
<svg style="left:2028.5px;top:863.5px" width="16" height="9" viewBox="0 0 16 9"><path d="M0,0H16L8,9Z" fill="#444"/></svg>
<div class="sbh" style="left:1254px;top:882px;width:769px;height:28px;"></div>
<div style="left:1254px;top:882px;width:27px;height:28px;border:1px solid #bdbdbd;background:linear-gradient(#fefefe,#f1f1f1)"></div>
<svg style="left:1262px;top:888.5px" width="8.5" height="15" viewBox="0 0 8.5 15"><path d="M8.5,0V15L0,7.5Z" fill="#555"/></svg>
<div class="th" style="left:1974px;top:882px;width:21px;height:28px;"></div>
<div style="left:1995px;top:882px;width:28px;height:28px;border:1px solid #bdbdbd;background:linear-gradient(#fefefe,#f1f1f1)"></div>
<svg style="left:2004px;top:888.5px" width="8.5" height="15" viewBox="0 0 8.5 15"><path d="M0,0V15L8.5,7.5Z" fill="#555"/></svg>
<div style="left:2023px;top:882px;width:27px;height:28px;border:1px solid #bdbdbd;background:#eeeeee"></div>
<svg style="left:1259px;top:945px" width="22" height="17" viewBox="0 0 22 17"><path d="M0,0H22L11,17Z" fill="#222"/></svg>
<div class="t" style="left:1299.5px;top:935px;height:36px;line-height:36px;font-size:26px;font-weight:700;color:#222;letter-spacing:0.17px;">Layer Rendering</div>
<div style="left:1256px;top:975px;width:794px;height:287px;border:2px solid #dadada;border-radius:4px;background:#e9e9e9"></div>
<div class="t" style="left:1261.5px;top:1003px;height:36px;line-height:36px;font-size:26px;font-weight:400;color:#222;letter-spacing:0.64px;">Opacity</div>
<div style="left:1456px;top:1014px;width:352px;height:10px;background:linear-gradient(#3a86e0,#5ea2f0);border:1px solid #3573c4;border-radius:5px"></div>
<div style="left:1804px;top:1007px;width:26px;height:25px;background:linear-gradient(#fff,#f0f0f0);border:1px solid #b0b0b0;border-radius:5px;box-shadow:0 1px 1px rgba(0,0,0,.15)"></div>
<div class="inp" style="left:1838px;top:999px;width:200px;height:43px;"></div>
<div style="left:2007px;top:1000px;width:1px;height:41px;background:#c4c4c4"></div>
<div style="left:2008px;top:1000px;width:29px;height:41px;background:linear-gradient(#fcfcfc,#f0f0f0);border-radius:0 4px 4px 0"></div>
<svg style="left:2015px;top:1007px" width="14" height="8" viewBox="0 0 14 8"><path d="M0,8H14L7,0Z" fill="#b4b4b4"/></svg>
<svg style="left:2015px;top:1025px" width="14" height="8" viewBox="0 0 14 8"><path d="M0,0H14L7,8Z" fill="#444"/></svg>
<div class="t" style="left:1850.0px;top:1002px;height:36px;line-height:36px;font-size:26px;font-weight:400;color:#111;letter-spacing:0.26px;">100.0 %</div>
<div class="t" style="left:1455.5px;top:1055px;height:36px;line-height:36px;font-size:26px;font-weight:400;color:#222;letter-spacing:-0.38px;">Layer</div>
<div class="t" style="left:1750.0px;top:1055px;height:36px;line-height:36px;font-size:26px;font-weight:400;color:#222;letter-spacing:-0.45px;">Feature</div>
<div class="t" style="left:1261.5px;top:1080px;height:36px;line-height:36px;font-size:26px;font-weight:400;color:#222;letter-spacing:0.47px;">Blending mode</div>
<div class="combo" style="left:1454px;top:1090px;width:291px;height:47px;"></div>
<div class="t" style="left:1466.0px;top:1097px;height:36px;line-height:36px;font-size:26px;font-weight:400;color:#111;letter-spacing:0.14px;">Normal</div>
<svg style="left:1715px;top:1109px" width="16" height="8" viewBox="0 0 16 8"><path d="M0,0H16L8,8Z" fill="#444"/></svg>
<div class="combo" style="left:1748px;top:1090px;width:290px;height:47px;"></div>
<div class="t" style="left:1760.0px;top:1097px;height:36px;line-height:36px;font-size:26px;font-weight:400;color:#111;letter-spacing:0.14px;">Normal</div>
<svg style="left:2007px;top:1109px" width="16" height="8" viewBox="0 0 16 8"><path d="M0,0H16L8,8Z" fill="#444"/></svg>
<div class="cb" style="left:1261px;top:1153px;width:27px;height:27px;"></div><svg style="left:1261px;top:1153px" width="27" height="27" viewBox="0 0 27 27"><path d="M7.100,14.400L12.400,21.700L20.900,7.500" fill="none" stroke="#1e1e1e" stroke-width="3.100" stroke-linecap="butt" stroke-linejoin="round"/></svg>
<div class="t" style="left:1300.0px;top:1149px;height:36px;line-height:36px;font-size:26px;font-weight:400;color:#222;letter-spacing:0.72px;">Draw effects</div>
<div class="btn" style="left:1990px;top:1150px;width:47px;height:32px;border:2px solid #ababab;border-radius:5px"></div>
<svg style="left:2000.8px;top:1152.5px" width="24" height="24" viewBox="0 0 48 48"><path d="M24,3L30.500,18L46.500,19.500L34.500,30L38,46L24,37.500L10,46L13.500,30L1.500,19.500L17.500,18Z" fill="#fff200" stroke="#e8960c" stroke-width="4" stroke-linejoin="round"/></svg>
<svg style="left:2011px;top:1165px" width="17" height="14" viewBox="0 0 17 14"><path d="M0.500,13L1.500,8L6,10.500ZM16,1L10,3.500L12.500,13Q11,6 16,1Z" fill="#1a1a1a"/></svg>
<div class="cb" style="left:1261px;top:1203px;width:27px;height:27px;"></div>
<div class="t" style="left:1300.0px;top:1199px;height:36px;line-height:36px;font-size:26px;font-weight:400;color:#222;letter-spacing:0.53px;">Control feature rendering order</div>
<div class="btn" style="left:1990px;top:1195px;width:47px;height:45px;border:2px solid #cdcdcd;border-radius:5px"></div>
<svg style="left:1997px;top:1200px;opacity:0.8" width="34" height="34" viewBox="0 0 48 48"><text x="4" y="21" font-family="'Liberation Sans',sans-serif" font-weight="700" font-size="21" fill="#f4f0f0" stroke="#d8c8c8" stroke-width="1.200">A</text><text x="5" y="43" font-family="'Liberation Sans',sans-serif" font-weight="700" font-size="21" fill="#eef0f2" stroke="#c4ccd4" stroke-width="1.200">Z</text><path d="M32,4H36V28H45L34,44L23,28H32Z" fill="#d2d6da" stroke="#c6cace" stroke-width="1"/></svg>
<svg style="left:1247px;top:1139.3px" width="54" height="54" viewBox="0 0 54 54"><circle cx="27" cy="27" r="24.500" fill="none" stroke="#fb2a10" stroke-width="3.700"/></svg>
<svg style="left:1987.4px;top:1139.3px" width="54" height="54" viewBox="0 0 54 54"><circle cx="27" cy="27" r="24.500" fill="none" stroke="#fb2a10" stroke-width="3.700"/></svg>
<div class="btn" style="left:1255px;top:1277px;width:47px;height:45px;"></div>
<svg style="left:1263px;top:1284px" width="30" height="30" viewBox="0 0 48 48"><path d="M4,18L20,3V11C38,11 46,22 42,34C39,43 28,46 20,45L22,37C28,38 32,35 33,29C33,23 28,22 20,23V32Z" fill="#f0853a" stroke="#c8601c" stroke-width="1.500" stroke-linejoin="round"/></svg>
<div class="btn" style="left:1314px;top:1277px;width:48px;height:45px;"></div>
<svg style="left:1323px;top:1284px" width="30" height="30" viewBox="0 0 48 48"><path d="M44,18L28,3V11C10,11 2,22 6,34C9,43 20,46 28,45L26,37C20,38 16,35 15,29C15,23 20,22 28,23V32Z" fill="#7fc68a" stroke="#3f9a50" stroke-width="1.500" stroke-linejoin="round"/></svg>
<div class="cb" style="left:1687px;top:1287px;width:27px;height:27px;"></div><svg style="left:1687px;top:1287px" width="27" height="27" viewBox="0 0 27 27"><path d="M7.100,14.400L12.400,21.700L20.900,7.500" fill="none" stroke="#1e1e1e" stroke-width="3.100" stroke-linecap="butt" stroke-linejoin="round"/></svg>
<div class="t" style="left:1726.0px;top:1283px;height:36px;line-height:36px;font-size:26px;font-weight:400;color:#222;letter-spacing:0.36px;">Live update</div>
<div class="btn" style="left:1891px;top:1277px;width:159px;height:47px;"></div>
<div class="t" style="left:1937.0px;top:1283px;height:36px;line-height:36px;font-size:26px;font-weight:400;color:#111;letter-spacing:0.38px;">Apply</div>
<div style="left:0px;top:1331px;width:2052px;height:59px;background:linear-gradient(#ececec,#ececec 30%,#dddddd)"></div>
<div class="inp" style="left:2px;top:1337px;width:428px;height:47px;border-color:#a4a4a4"></div>
<svg style="left:18px;top:1347px" width="28" height="28" viewBox="0 0 28 28"><circle cx="11" cy="11" r="8" fill="none" stroke="#8a8a8a" stroke-width="2.4"/><path d="M17,17L25,25" stroke="#8a8a8a" stroke-width="2.8" stroke-linecap="round"/></svg>
<div class="t" style="left:61.5px;top:1343px;height:36px;line-height:36px;font-size:26px;font-weight:400;color:#858585;letter-spacing:0.76px;">Type to locate (⌘K)</div>
<div class="t" style="left:489px;top:1345.5px;width:56px;height:31px;line-height:31px;font-size:22.5px;font-weight:400;color:#222;letter-spacing:0.9px">ordina</div>
<div class="inp" style="left:550px;top:1338px;width:248px;height:44px;"></div>
<div class="t" style="left:567.0px;top:1345px;height:32px;line-height:32px;font-size:23px;font-weight:400;color:#222;letter-spacing:1.17px;">2099398,-4061326</div>
<svg style="left:805px;top:1343px" width="32" height="32" viewBox="0 0 48 48"><path d="M9,7C15,1 28,5 35,18C41,30 39,43 30,45C21,47 11,38 7,26C5,17 5,11 9,7Z" fill="#f2f2f2" stroke="#0a0a0a" stroke-width="3.600"/><path d="M13,5L22,23L35,19" stroke="#0a0a0a" stroke-width="3" fill="none"/><path d="M17,9L22,19" stroke="#0a0a0a" stroke-width="4.500" stroke-linecap="round"/><ellipse cx="31" cy="37" rx="6" ry="5" fill="#d6c0c8" stroke="#0a0a0a" stroke-width="2.600"/><path d="M0,30L7,33M36,8L44,2M40,15L47,12" stroke="#0a0a0a" stroke-width="2.400" stroke-dasharray="2.500 2"/></svg>
<div class="t" style="left:864px;top:1345.5px;width:8px;height:31px;line-height:31px;font-size:22.5px;font-weight:400;color:#222;">a</div>
<div class="combo" style="left:878px;top:1338px;width:186px;height:45px;"></div>
<div style="left:1022px;top:1339px;width:1px;height:43px;background:#c4c4c4"></div>
<div class="t" style="left:886.5px;top:1345px;height:32px;line-height:32px;font-size:23px;font-weight:400;color:#111;letter-spacing:-0.26px;">1:1356978</div>
<svg style="left:1033px;top:1356px" width="16" height="8" viewBox="0 0 16 8"><path d="M0,0H16L8,8Z" fill="#444"/></svg>
<svg style="left:1084px;top:1344px" width="32" height="32" viewBox="0 0 48 48"><path d="M12,22V14C12,2 36,2 36,14V22" fill="none" stroke="#a9a9a9" stroke-width="5"/><rect x="5" y="21" width="38" height="24" rx="4" fill="#6e6e6e"/></svg>
<div class="t" style="left:1130px;top:1345.5px;width:36px;height:31px;line-height:31px;font-size:22.5px;font-weight:400;color:#222;letter-spacing:0.9px">gnif</div>
<div class="inp" style="left:1172px;top:1338px;width:186px;height:45px;"></div>
<div style="left:1327px;top:1339px;width:1px;height:43px;background:#c4c4c4"></div>
<div style="left:1328px;top:1339px;width:29px;height:43px;background:linear-gradient(#fcfcfc,#f0f0f0);border-radius:0 4px 4px 0"></div>
<svg style="left:1335px;top:1347px" width="14" height="8" viewBox="0 0 14 8"><path d="M0,8H14L7,0Z" fill="#444"/></svg>
<svg style="left:1335px;top:1366px" width="14" height="8" viewBox="0 0 14 8"><path d="M0,0H14L7,8Z" fill="#444"/></svg>
<div class="t" style="left:1183.0px;top:1345px;height:32px;line-height:32px;font-size:23px;font-weight:400;color:#111;letter-spacing:-0.63px;">100%</div>
<div class="t" style="left:1375.0px;top:1345.5px;height:31px;line-height:31px;font-size:22.5px;font-weight:400;color:#222;letter-spacing:0.01px;">tat</div>
<div class="inp" style="left:1420px;top:1338px;width:187px;height:45px;"></div>
<div style="left:1576px;top:1339px;width:1px;height:43px;background:#c4c4c4"></div>
<div style="left:1577px;top:1339px;width:29px;height:43px;background:linear-gradient(#fcfcfc,#f0f0f0);border-radius:0 4px 4px 0"></div>
<svg style="left:1584px;top:1347px" width="14" height="8" viewBox="0 0 14 8"><path d="M0,8H14L7,0Z" fill="#444"/></svg>
<svg style="left:1584px;top:1366px" width="14" height="8" viewBox="0 0 14 8"><path d="M0,0H14L7,8Z" fill="#444"/></svg>
<div class="t" style="left:1431.0px;top:1345px;height:32px;line-height:32px;font-size:23px;font-weight:400;color:#111;letter-spacing:0.60px;">0.0 °</div>
<div class="cb" style="left:1619px;top:1347px;width:27px;height:27px;"></div><svg style="left:1619px;top:1347px" width="27" height="27" viewBox="0 0 27 27"><path d="M7.100,14.400L12.400,21.700L20.900,7.500" fill="none" stroke="#1e1e1e" stroke-width="3.100" stroke-linecap="butt" stroke-linejoin="round"/></svg>
<div class="t" style="left:1658.0px;top:1345.5px;height:31px;line-height:31px;font-size:22.5px;font-weight:400;color:#222;letter-spacing:-0.46px;">Render</div>
<svg style="left:1762px;top:1344px" width="32" height="32" viewBox="0 0 48 48"><g fill="none" stroke="#707070" stroke-width="2.200" stroke-linejoin="round"><path d="M1.500,20C8,14 14,5 24,4C34,5 40,14 46.500,20C40,25 8,25 1.500,20Z" fill="#e4e4e4"/><path d="M24,4V23M24,4L11,22M24,4L37,22M24,4L4,20.500M24,4L44,20.500M9,13.500C16,16 32,16 39,13.500"/><path d="M8,23.500C8,46 40,46 40,23.500"/><path d="M24,24V41M15,24C15,34 18,40 24,41C30,40 33,34 33,24M9.500,31H38.500M13,36.500H35"/></g></svg>
<div class="t" style="left:1799.0px;top:1345.5px;height:31px;line-height:31px;font-size:22.5px;font-weight:400;color:#222;letter-spacing:-0.10px;">EPSG:3857</div>
<svg style="left:1962px;top:1343px" width="36" height="36" viewBox="0 0 48 48"><path d="M24,4C38,4 46,12 46,21C46,30 38,38 27,38C28,42 31,45 34,46C27,46 21,43 18,37C8,35 2,29 2,21C2,12 10,4 24,4Z" fill="#5a5a5a"/><circle cx="14" cy="21" r="3" fill="#fff"/><circle cx="24" cy="21" r="3" fill="#fff"/><circle cx="34" cy="21" r="3" fill="#fff"/></svg>
<svg style="left:0;top:1376px" width="18" height="14" viewBox="0 0 18 14"><path d="M0,7.500Q5,12.500 17,14H0Z" fill="#2e1375"/></svg>
<svg style="left:2030px;top:1376px" width="22" height="14" viewBox="0 0 22 14"><path d="M22,5.500Q15,12.500 2,14H22Z" fill="#6508a8"/></svg>
<svg style="left:2030px;top:1364px" width="22" height="26" viewBox="0 0 22 26"><rect x="3" y="21" width="2" height="2" fill="#f6f6f6"/><rect x="2" y="20" width="2" height="2" fill="#9c9c9c"/><rect x="9" y="21" width="2" height="2" fill="#f6f6f6"/><rect x="8" y="20" width="2" height="2" fill="#9c9c9c"/><rect x="15" y="21" width="2" height="2" fill="#f6f6f6"/><rect x="14" y="20" width="2" height="2" fill="#9c9c9c"/><rect x="9" y="15" width="2" height="2" fill="#f6f6f6"/><rect x="8" y="14" width="2" height="2" fill="#9c9c9c"/><rect x="15" y="15" width="2" height="2" fill="#f6f6f6"/><rect x="14" y="14" width="2" height="2" fill="#9c9c9c"/><rect x="21" y="15" width="2" height="2" fill="#f6f6f6"/><rect x="20" y="14" width="2" height="2" fill="#9c9c9c"/><rect x="15" y="9" width="2" height="2" fill="#f6f6f6"/><rect x="14" y="8" width="2" height="2" fill="#9c9c9c"/><rect x="21" y="9" width="2" height="2" fill="#f6f6f6"/><rect x="20" y="8" width="2" height="2" fill="#9c9c9c"/><rect x="21" y="3" width="2" height="2" fill="#f6f6f6"/><rect x="20" y="2" width="2" height="2" fill="#9c9c9c"/></svg>
</body></html>
